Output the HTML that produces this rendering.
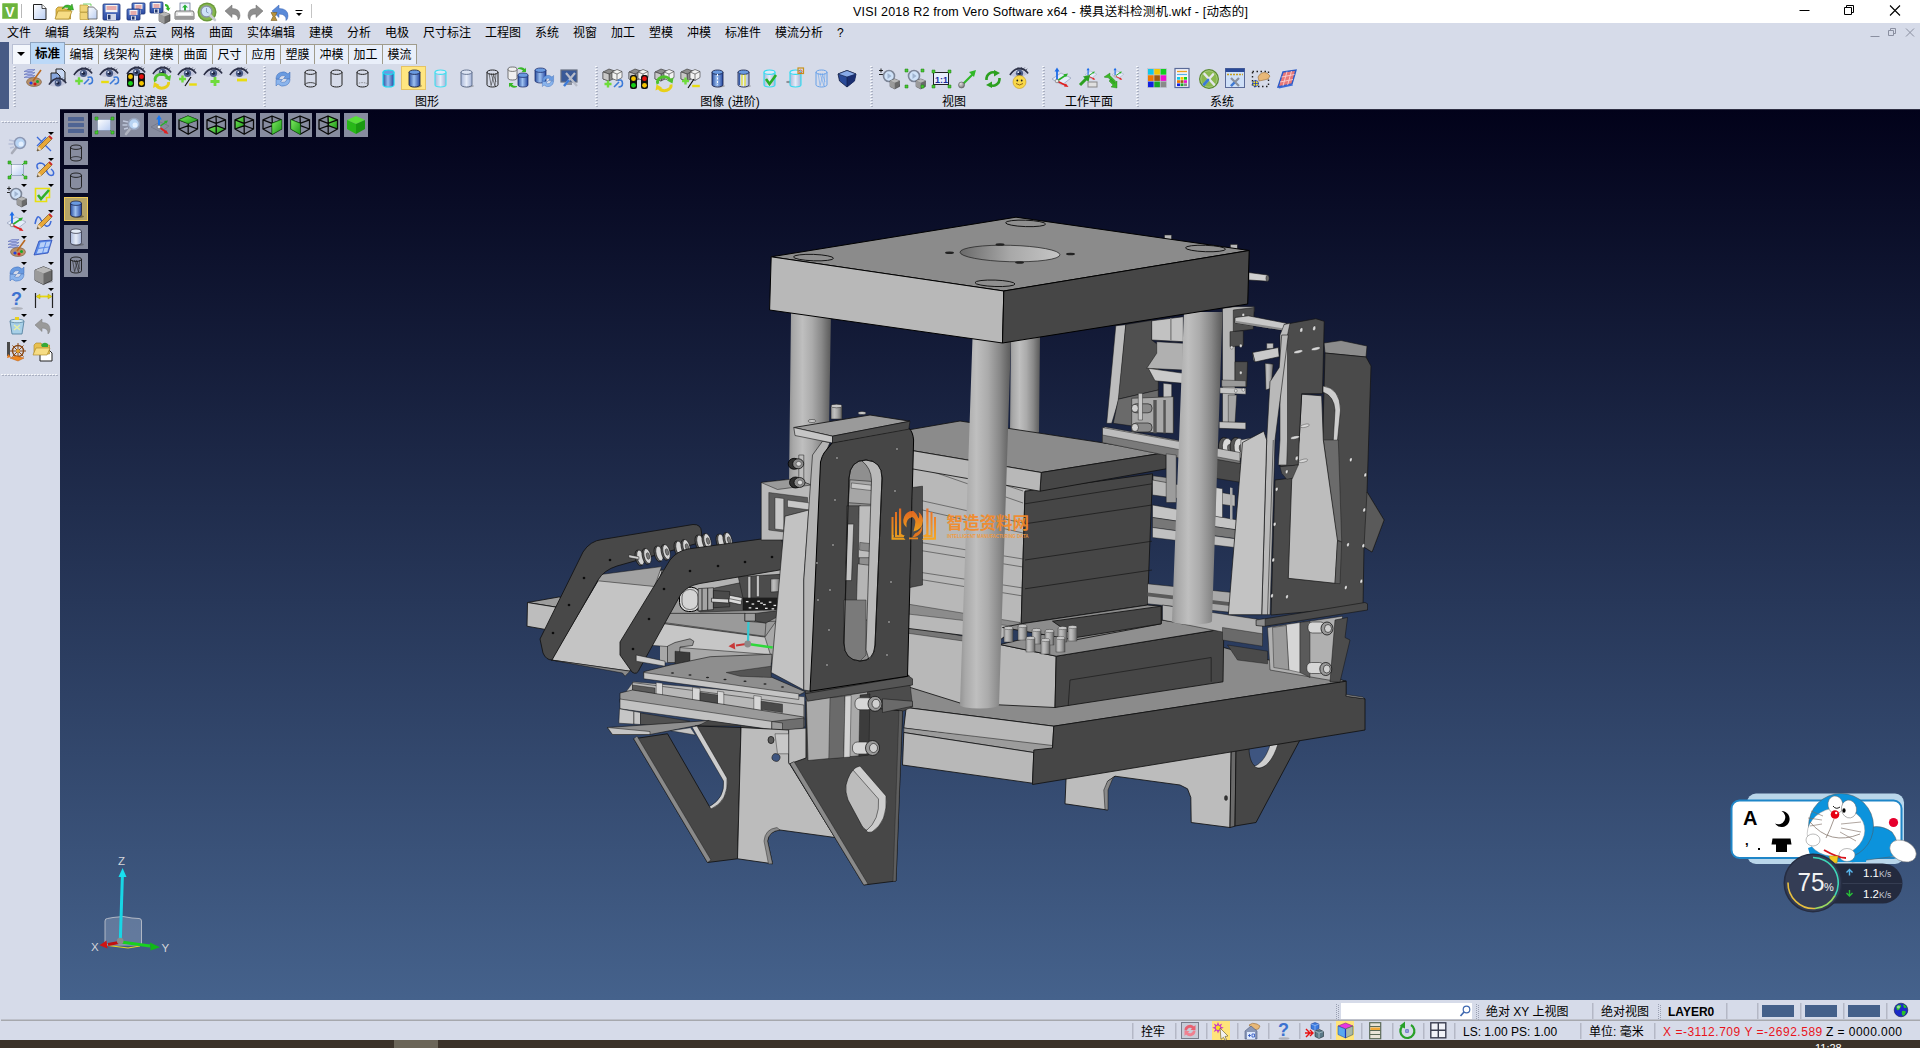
<!DOCTYPE html>
<html lang="zh"><head><meta charset="utf-8"><title>VISI 2018 R2 from Vero Software x64</title>
<style>
html,body{margin:0;padding:0;background:#d6dbe9;overflow:hidden}
#app{position:relative;width:1920px;height:1048px;overflow:hidden;background:#d6dbe9;font-family:"Liberation Sans","Noto Sans CJK SC",sans-serif}
.t{position:absolute;white-space:nowrap;line-height:1;font-size:12px;color:#000}
svg text{font-family:"Liberation Sans","Noto Sans CJK SC",sans-serif}
</style>

</head><body>
<div id="app">
<svg id="vp" width="1860" height="891" viewBox="60 109 1860 891" style="position:absolute;left:60px;top:109px">
<defs>
<linearGradient id="bg" x1="0" y1="0" x2="0" y2="1"><stop offset="0" stop-color="#02021a"/><stop offset="1" stop-color="#45628c"/></linearGradient>
<linearGradient id="cyl" x1="0" y1="0" x2="1" y2="0"><stop offset="0" stop-color="#959595"/><stop offset="0.1" stop-color="#a8a8a8"/><stop offset="0.32" stop-color="#bfbfbf"/><stop offset="0.55" stop-color="#ababab"/><stop offset="0.78" stop-color="#888888"/><stop offset="0.93" stop-color="#686868"/><stop offset="1" stop-color="#5a5a5a"/></linearGradient>
<linearGradient id="hole" x1="0" y1="0" x2="1" y2="0"><stop offset="0" stop-color="#6a6a6a"/><stop offset="0.5" stop-color="#a8a8a8"/><stop offset="1" stop-color="#c6c6c6"/></linearGradient>
</defs>
<rect x="60" y="109" width="1860" height="891" fill="url(#bg)"/>
<rect x="60" y="108" width="1860" height="1.2" fill="#e8ebf3"/>
<path d="M791,312 L789,486 A19.5,3.51 0 0 0 828,486 L831,312 Z" fill="url(#cyl)"/>
<path d="M1011,336 L1010,432 A14.5,2.61 0 0 0 1039,432 L1040,336 Z" fill="url(#cyl)"/>
<polygon points="1066.2,775.0 1065.0,803.8 1107.5,810.0 1105.0,790.0 1108.0,781.2 1115.0,776.2 1180.0,785.0 1187.5,788.8 1190.8,797.5 1191.2,822.5 1230.0,827.5 1231.2,750.0" fill="#bcbcbc" stroke="#121212" stroke-width="0.85" stroke-linejoin="round" />
<polygon points="1230.0,827.5 1235.0,826.2 1236.2,750.0 1231.2,750.0" fill="#6a6a6a" stroke="#121212" stroke-width="0.85" stroke-linejoin="round" />
<polygon points="1103.8,790.0 1107.5,781.2 1115.0,776.2 1112.5,779.0 1108.0,790.0 1108.0,810.0 1105.0,809.5" fill="#8a8a8a" stroke="#121212" stroke-width="0.5" stroke-linejoin="round" />
<path d="M1236,748 L1301,738 L1256,822.5 L1235,826 Z" fill="#464646" stroke="#121212" stroke-width="0.85" stroke-linejoin="round" />
<path d="M1249,748 L1277,744 C1272,760 1266,768 1258,768 C1252,766 1249,758 1249,748 Z" fill="#3e5580" stroke="#121212" stroke-width="0.6" stroke-linejoin="round" />
<path d="M1270,745 L1278,744 C1273,760 1266,768 1258,768 C1256,767.6 1255,767 1254.5,766.3 C1262,763 1267,755 1270,745Z" fill="#cfcfcf" stroke="#121212" stroke-width="0.5" stroke-linejoin="round" />
<ellipse cx="1226" cy="798" rx="1.6" ry="2.6" fill="#333" stroke="#1c1c1c" stroke-width="0.4" />
<polygon points="895.0,677.5 895.0,706.2 906.2,707.5 1053.8,726.2 1346.2,681.2 1200,641" fill="#8b8b8b" stroke="#121212" stroke-width="0.85" stroke-linejoin="round" />
<polygon points="906.2,707.5 1053.8,726.2 1052.5,748.0 903.8,728.0" fill="#b8b8b8" stroke="#121212" stroke-width="0.85" stroke-linejoin="round" />
<polygon points="903.8,728.0 1052.5,745.5 1052.5,748.8 1033.8,752.5 903.8,732.5" fill="#9c9c9c" stroke="#121212" stroke-width="0.5" stroke-linejoin="round" />
<polygon points="903.8,732.5 1033.8,752.5 1032.5,783.2 902.5,765.0" fill="#b8b8b8" stroke="#121212" stroke-width="0.85" stroke-linejoin="round" />
<polygon points="1053.8,726.2 1346.2,681.2 1346.2,696.2 1365.0,698.8 1365.0,730.0 1032.5,784.5 1033.8,750.0 1052.5,748.0" fill="#464646" stroke="#121212" stroke-width="0.85" stroke-linejoin="round" />
<polygon points="1346.2,696.2 1365.0,698.8 1362.5,697.0 1346.2,694.5" fill="#8a8a8a" stroke="#121212" stroke-width="0.5" stroke-linejoin="round" />
<polygon points="1000.0,644.5 1056.2,656.2 1055.0,707.5 960.0,703.0 906.2,686.2 906.2,626.2" fill="#b8b8b8" stroke="#121212" stroke-width="0.85" stroke-linejoin="round" />
<polygon points="906.2,625.5 1000.0,643.0 1000.0,646.2 906.2,633.0" fill="#777" stroke="#121212" stroke-width="0.4" stroke-linejoin="round" />
<polygon points="1056.2,656.2 1223.8,628.8 1223.0,681.8 1055.0,707.5" fill="#464646" stroke="#121212" stroke-width="0.85" stroke-linejoin="round" />
<polyline points="1070.0,680.0 1211.2,657.5 1211.2,681.8" fill="none" stroke="#1a1a1a" stroke-width="0.7"/>
<polyline points="1070.0,680.0 1068.2,705.8" fill="none" stroke="#1a1a1a" stroke-width="0.7"/>
<polygon points="1000.0,644.5 1056.2,656.2 1223.8,628.8 1161.2,620.0 1161.2,606.2" fill="#8f8f8f" stroke="#121212" stroke-width="0.85" stroke-linejoin="round" />
<polygon points="905,437 1041.2,472.5 1040.0,491.2 1025.0,491.2 1021.2,623.8 1000,640 905,628" fill="#b8b8b8" stroke="#121212" stroke-width="0.85" stroke-linejoin="round" />
<polygon points="906.2,603.8 1020.0,622.5 1020.0,627.0 906.2,613.8" fill="#8c8c8c" stroke="#121212" stroke-width="0.4" stroke-linejoin="round" />
<polyline points="905,452 1023,491" fill="none" stroke="#3a3a3a" stroke-width="0.6"/>
<polyline points="905,462 1023,503" fill="none" stroke="#3a3a3a" stroke-width="0.6"/>
<polyline points="905,497 1023,523" fill="none" stroke="#3a3a3a" stroke-width="0.6"/>
<polyline points="905,506 1023,533" fill="none" stroke="#3a3a3a" stroke-width="0.6"/>
<polyline points="905,540 1023,559" fill="none" stroke="#3a3a3a" stroke-width="0.6"/>
<polyline points="905,548 1023,567" fill="none" stroke="#3a3a3a" stroke-width="0.6"/>
<polyline points="905,570 1023,588" fill="none" stroke="#3a3a3a" stroke-width="0.6"/>
<polyline points="905,577 1023,596" fill="none" stroke="#3a3a3a" stroke-width="0.6"/>
<polygon points="1025.0,491.2 1152.5,473.8 1147.5,605.0 1021.2,623.8" fill="#464646" stroke="#121212" stroke-width="0.85" stroke-linejoin="round" />
<polyline points="1025.0,503.8 1152.0,483.8" fill="none" stroke="#161616" stroke-width="0.7"/>
<polyline points="1025.0,523.8 1152.0,505.0" fill="none" stroke="#161616" stroke-width="0.7"/>
<polyline points="1025.0,560.0 1152.0,541.2" fill="none" stroke="#161616" stroke-width="0.7"/>
<polyline points="1025.0,588.8 1152.0,570.0" fill="none" stroke="#161616" stroke-width="0.7"/>
<polygon points="1021.2,623.8 1147.5,605.0 1161.2,606.2 1161.2,623.8 1075.0,640.0 1002.5,627.5" fill="#8c8c8c" stroke="#121212" stroke-width="0.85" stroke-linejoin="round" />
<polygon points="1052.5,621.2 1161.2,606.2 1161.2,623.8 1076.2,637.5" fill="#464646" stroke="#121212" stroke-width="0.85" stroke-linejoin="round" />
<polygon points="850,440 960,421 1166.2,452.5 1041.2,472.5" fill="#8b8b8b" stroke="#121212" stroke-width="0.85" stroke-linejoin="round" />
<polygon points="1041.2,472.5 1166.2,452.5 1166.2,468.8 1040.0,491.2" fill="#464646" stroke="#121212" stroke-width="0.85" stroke-linejoin="round" />
<polygon points="850,440 1041.2,472.5 1040.0,491.2 850,458" fill="#b8b8b8" stroke="#121212" stroke-width="0.85" stroke-linejoin="round" />
<rect x="1004" y="628" width="9" height="14" fill="url(#cyl)" stroke="#333" stroke-width="0.4"/>
<ellipse cx="1008.5" cy="628" rx="4.5" ry="1.6" fill="#c8c8c8" stroke="#333" stroke-width="0.4" />
<rect x="1018" y="626" width="9" height="14" fill="url(#cyl)" stroke="#333" stroke-width="0.4"/>
<ellipse cx="1022.5" cy="626" rx="4.5" ry="1.6" fill="#c8c8c8" stroke="#333" stroke-width="0.4" />
<rect x="1032" y="630" width="9" height="14" fill="url(#cyl)" stroke="#333" stroke-width="0.4"/>
<ellipse cx="1036.5" cy="630" rx="4.5" ry="1.6" fill="#c8c8c8" stroke="#333" stroke-width="0.4" />
<rect x="1045" y="631" width="9" height="14" fill="url(#cyl)" stroke="#333" stroke-width="0.4"/>
<ellipse cx="1049.5" cy="631" rx="4.5" ry="1.6" fill="#c8c8c8" stroke="#333" stroke-width="0.4" />
<rect x="1058" y="628" width="9" height="14" fill="url(#cyl)" stroke="#333" stroke-width="0.4"/>
<ellipse cx="1062.5" cy="628" rx="4.5" ry="1.6" fill="#c8c8c8" stroke="#333" stroke-width="0.4" />
<rect x="1068" y="627" width="9" height="14" fill="url(#cyl)" stroke="#333" stroke-width="0.4"/>
<ellipse cx="1072.5" cy="627" rx="4.5" ry="1.6" fill="#c8c8c8" stroke="#333" stroke-width="0.4" />
<rect x="1026" y="638" width="9" height="14" fill="url(#cyl)" stroke="#333" stroke-width="0.4"/>
<ellipse cx="1030.5" cy="638" rx="4.5" ry="1.6" fill="#c8c8c8" stroke="#333" stroke-width="0.4" />
<rect x="1041" y="640" width="9" height="14" fill="url(#cyl)" stroke="#333" stroke-width="0.4"/>
<ellipse cx="1045.5" cy="640" rx="4.5" ry="1.6" fill="#c8c8c8" stroke="#333" stroke-width="0.4" />
<rect x="1056" y="638" width="9" height="14" fill="url(#cyl)" stroke="#333" stroke-width="0.4"/>
<ellipse cx="1060.5" cy="638" rx="4.5" ry="1.6" fill="#c8c8c8" stroke="#333" stroke-width="0.4" />
<polygon points="1115.8,325.8 1125.8,324.7 1119.2,398.3 1111.7,423.3 1106.7,423.3" fill="#bdbdbd" stroke="#121212" stroke-width="0.5" stroke-linejoin="round" />
<polygon points="1125.8,324.5 1151.7,320.3 1151.7,340.0 1158.3,345.0 1158.3,390.0 1118.3,399.2" fill="#505050" stroke="#121212" stroke-width="0.5" stroke-linejoin="round" />
<polygon points="1118.3,399.2 1158.3,390.0 1158.3,396.7 1173.3,396.7 1173.3,431.7 1113.3,423.3" fill="#6a6a6a" stroke="#121212" stroke-width="0.5" stroke-linejoin="round" />
<polygon points="1151.7,320.8 1183.3,316.7 1183.3,341.7 1151.7,340.0" fill="#c2c2c2" stroke="#121212" stroke-width="0.6" stroke-linejoin="round" />
<polygon points="1170.0,318.3 1171.7,318.2 1171.7,341.0 1170.0,340.8" fill="#8a8a8a" />
<polygon points="1156.7,341.7 1183.3,343.3 1183.3,370.0 1146.7,368.3 1156.7,353.3" fill="#b0b0b0" stroke="#121212" stroke-width="0.5" stroke-linejoin="round" />
<polygon points="1148.3,368.3 1183.3,373.3 1183.3,383.3 1155.0,380.8" fill="#cacaca" stroke="#121212" stroke-width="0.5" stroke-linejoin="round" />
<polygon points="1163.3,383.3 1171.7,384.2 1171.7,398.3 1163.3,398.3" fill="#c2c2c2" stroke="#121212" stroke-width="0.4" stroke-linejoin="round" />
<polygon points="1131.7,398.3 1173.3,396.7 1173.3,433.3 1131.7,431.7" fill="#a8a8a8" stroke="#121212" stroke-width="0.5" stroke-linejoin="round" />
<polygon points="1153.3,400.0 1156.7,400.0 1156.7,433.3 1153.3,433.3" fill="#555" />
<polygon points="1163.3,400.0 1165.8,400.0 1165.8,433.3 1163.3,433.3" fill="#555" />
<rect x="1132.0" y="403.8" width="20" height="9" rx="4" fill="#8a8a8a" stroke="#111" stroke-width="0.6"/>
<ellipse cx="1135.0" cy="408.3" rx="3.5" ry="4" fill="#d0d0d0" stroke="#111" stroke-width="0.6" />
<rect x="1132.0" y="423.0" width="20" height="9" rx="4" fill="#8a8a8a" stroke="#111" stroke-width="0.6"/>
<ellipse cx="1135.0" cy="427.5" rx="3.5" ry="4" fill="#d0d0d0" stroke="#111" stroke-width="0.6" />
<polygon points="1138.3,393.3 1142.5,393.3 1142.5,420.0 1138.3,420.0" fill="#c8c8c8" stroke="#121212" stroke-width="0.4" stroke-linejoin="round" />
<polygon points="1104.2,426.7 1180.0,440.8 1180.0,450.0 1104.2,435.0" fill="#c6c6c6" stroke="#121212" stroke-width="0.5" stroke-linejoin="round" />
<polygon points="1104.2,435.0 1180.0,450.0 1180.0,456.7 1110.0,441.7" fill="#8a8a8a" stroke="#121212" stroke-width="0.4" stroke-linejoin="round" />
<polygon points="1222.5,308.3 1235.0,306.7 1254.2,306.7 1254.2,311.7 1235.0,315.0 1235.0,423.3 1222.5,423.3" fill="#b5b5b5" stroke="#121212" stroke-width="0.5" stroke-linejoin="round" />
<polygon points="1233.3,310.0 1254.2,307.5 1253.3,329.2 1233.3,331.7" fill="#4e4e4e" stroke="#121212" stroke-width="0.5" stroke-linejoin="round" />
<polygon points="1230.0,331.7 1243.3,330.8 1243.3,345.8 1230.0,346.7" fill="#4e4e4e" stroke="#121212" stroke-width="0.5" stroke-linejoin="round" />
<polygon points="1235.0,361.7 1247.5,361.7 1246.7,386.7 1235.0,386.7" fill="#4e4e4e" stroke="#121212" stroke-width="0.5" stroke-linejoin="round" />
<polygon points="1221.7,380.0 1245.8,380.8 1245.8,386.7 1221.7,386.7" fill="#9a9a9a" stroke="#121212" stroke-width="0.4" stroke-linejoin="round" />
<polygon points="1220.0,387.5 1245.8,388.3 1245.8,394.2 1220.0,393.3" fill="#c6c6c6" stroke="#121212" stroke-width="0.4" stroke-linejoin="round" />
<polygon points="1228.3,395.0 1236.7,395.0 1235.0,423.3 1228.3,423.3" fill="#a4a4a4" stroke="#121212" stroke-width="0.4" stroke-linejoin="round" />
<polygon points="1219.2,421.7 1245.8,422.5 1245.8,429.2 1219.2,428.3" fill="#c2c2c2" stroke="#121212" stroke-width="0.5" stroke-linejoin="round" />
<ellipse cx="1231.7" cy="347.5" rx="1.4" ry="1.7" fill="#d8d8d8" stroke="#111" stroke-width="0.3" />
<ellipse cx="1240.8" cy="345.8" rx="1.4" ry="1.7" fill="#d8d8d8" stroke="#111" stroke-width="0.3" />
<ellipse cx="1240.8" cy="372.8" rx="1.4" ry="1.7" fill="#d8d8d8" stroke="#111" stroke-width="0.3" />
<ellipse cx="1235.8" cy="390.8" rx="1.4" ry="1.7" fill="#d8d8d8" stroke="#111" stroke-width="0.3" />
<ellipse cx="1243.3" cy="389.7" rx="1.4" ry="1.7" fill="#d8d8d8" stroke="#111" stroke-width="0.3" />
<ellipse cx="1243.3" cy="315.0" rx="1.4" ry="1.7" fill="#d8d8d8" stroke="#111" stroke-width="0.3" />
<ellipse cx="1225.0" cy="448.3" rx="6.5" ry="11" fill="#555" stroke="#111" stroke-width="0.7" transform="rotate(-8 1225.0 448.3)" />
<ellipse cx="1228.0" cy="448.3" rx="5.5" ry="10" fill="#d8d8d8" stroke="#111" stroke-width="0.5" transform="rotate(-8 1228.0 448.3)" />
<ellipse cx="1230.0" cy="448.3" rx="2.5" ry="4" fill="#666" stroke="#111" stroke-width="0.4" transform="rotate(-8 1230.0 448.3)" />
<ellipse cx="1236.7" cy="448.3" rx="6.5" ry="11" fill="#555" stroke="#111" stroke-width="0.7" transform="rotate(-8 1236.7 448.3)" />
<ellipse cx="1239.7" cy="448.3" rx="5.5" ry="10" fill="#d8d8d8" stroke="#111" stroke-width="0.5" transform="rotate(-8 1239.7 448.3)" />
<ellipse cx="1241.7" cy="448.3" rx="2.5" ry="4" fill="#666" stroke="#111" stroke-width="0.4" transform="rotate(-8 1241.7 448.3)" />
<polygon points="1240.8,440.0 1256.7,436.7 1256.7,464.7 1240.8,464.7" fill="#c9c9c9" stroke="#121212" stroke-width="0.4" stroke-linejoin="round" />
<polygon points="1235.0,317.5 1248.3,315.8 1286.7,323.3 1285.3,330.8 1235.0,322.8" fill="#c8c8c8" stroke="#121212" stroke-width="0.6" stroke-linejoin="round" />
<polygon points="1235.0,320.8 1285.3,328.7 1285.3,330.8 1235.0,322.8" fill="#8e8e8e" />
<polygon points="1248.8,272.5 1267.5,275.0 1267.5,281.2 1248.8,280.0" fill="#cfcfcf" stroke="#121212" stroke-width="0.6" stroke-linejoin="round" />
<ellipse cx="1267.5" cy="278.2" rx="1.6" ry="3" fill="#666" stroke="#1c1c1c" stroke-width="0.4" />
<rect x="1164.5" y="235.0" width="7" height="6" fill="#b8b8b8" stroke="#222" stroke-width="0.5"/>
<rect x="1230.3" y="244.5" width="7" height="6" fill="#b8b8b8" stroke="#222" stroke-width="0.5"/>
<polygon points="1102.5,427.5 1240.0,452.5 1240.0,470.0 1102.5,442.5" fill="#bdbdbd" stroke="#121212" stroke-width="0.5" stroke-linejoin="round" />
<polygon points="1102.5,435.0 1240.0,461.2 1240.0,470.0 1102.5,442.5" fill="#7a7a7a" stroke="#121212" stroke-width="0.4" stroke-linejoin="round" />
<polygon points="1212.1,458.6 1242.7,464.0 1241.7,482.5 1212.1,477.7" fill="#4a4a4a" stroke="#121212" stroke-width="0.5" stroke-linejoin="round" />
<polygon points="1153.0,475.8 1175.9,478.7 1175.9,495.8 1153.0,493.0" fill="#9a9a9a" stroke="#121212" stroke-width="0.5" stroke-linejoin="round" />
<polygon points="1153.9,481.5 1159.7,481.9 1159.7,491.1 1153.9,490.7" fill="#d0d0d0" stroke="#121212" stroke-width="0.4" stroke-linejoin="round" />
<polygon points="1165.4,483.4 1172.1,484.0 1172.1,493.9 1165.4,493.0" fill="#d0d0d0" stroke="#121212" stroke-width="0.4" stroke-linejoin="round" />
<polygon points="1152.5,480.0 1235.0,495.0 1235.0,506.2 1152.5,495.0" fill="#b8b8b8" stroke="#121212" stroke-width="0.5" stroke-linejoin="round" />
<polygon points="1152.5,505.0 1237.5,520.0 1237.5,530.0 1152.5,517.5" fill="#c4c4c4" stroke="#121212" stroke-width="0.5" stroke-linejoin="round" />
<polygon points="1152.5,517.5 1237.5,530.0 1237.5,538.8 1152.5,527.5" fill="#777" stroke="#121212" stroke-width="0.4" stroke-linejoin="round" />
<polygon points="1152.5,527.5 1235.0,538.8 1235.0,547.5 1152.5,537.5" fill="#c0c0c0" stroke="#121212" stroke-width="0.4" stroke-linejoin="round" />
<polygon points="1166.2,453.8 1176.2,455.0 1176.2,502.5 1166.2,502.5" fill="#9c9c9c" stroke="#121212" stroke-width="0.4" stroke-linejoin="round" />
<polygon points="1215.0,487.5 1222.5,488.8 1222.5,517.5 1215.0,516.2" fill="#cfcfcf" stroke="#121212" stroke-width="0.4" stroke-linejoin="round" />
<polygon points="1230.0,487.5 1232.5,488.0 1232.5,520.0 1230.0,520.0" fill="#a8a8a8" />
<polygon points="1147.5,583.8 1232.5,592.5 1232.5,612.5 1147.5,603.8" fill="#a9a9a9" stroke="#121212" stroke-width="0.5" stroke-linejoin="round" />
<polygon points="1147.5,592.5 1232.5,602.5 1232.5,606.2 1147.5,596.2" fill="#5a5a5a" />
<polygon points="1162.5,605.0 1262.5,620.0 1262.5,640.0 1162.5,620.0" fill="#b2b2b2" stroke="#121212" stroke-width="0.5" stroke-linejoin="round" />
<polygon points="1222.5,627.5 1262.5,633.8 1262.5,646.2 1222.5,640.0" fill="#6a6a6a" stroke="#121212" stroke-width="0.4" stroke-linejoin="round" />
<polygon points="1227.5,645.0 1267.5,651.2 1267.5,663.8 1237.5,660.0" fill="#4a4a4a" stroke="#121212" stroke-width="0.4" stroke-linejoin="round" />
<polygon points="1324,343 1341,340.5 1367,346 1366,357 1325,353" fill="#8c8c8c" stroke="#121212" stroke-width="0.6" stroke-linejoin="round" />
<polygon points="1325,353 1366,357 1371,366 1367,492 1384,520 1372,552 1364,547 1363,607 1271,615 1275,480 1292,478 1294,465 1322,465" fill="#4a4a4a" stroke="#121212" stroke-width="0.7" stroke-linejoin="round" />
<polygon points="1367,492 1384,520 1372,552 1364,547" fill="#5a5a5a" stroke="#121212" stroke-width="0.5" stroke-linejoin="round" />
<path d="M1323,386 Q1340,388 1340.5,410 L1337,445 L1333,445 L1335,410 Q1334,396 1323,392 Z" fill="#cdcdcd" stroke="#121212" stroke-width="0.5" stroke-linejoin="round" />
<polygon points="1323.3,440.0 1338.3,440.0 1341.7,541.7 1336.7,540.0" fill="#6b6b6b" stroke="#121212" stroke-width="0.4" stroke-linejoin="round" />
<polygon points="1301.7,394.2 1321.7,395.8 1323.3,440.0 1337.5,540.8 1335.0,583.3 1288.3,578.3 1291.7,480.0 1299.2,440.0" fill="#bdbdbd" stroke="#121212" stroke-width="0.7" stroke-linejoin="round" />
<polygon points="1337.5,540.8 1341.7,542.0 1340.0,583.7 1335.0,583.3" fill="#5c5c5c" stroke="#121212" stroke-width="0.4" stroke-linejoin="round" />
<polygon points="1284.2,324.5 1315.8,318.7 1324.2,321.3 1322.5,393.7 1301.7,393.7 1299.2,440.0 1298.3,465.0 1280.0,466.7 1281.7,440.0" fill="#4c4c4c" stroke="#121212" stroke-width="0.7" stroke-linejoin="round" />
<polygon points="1280.0,335.0 1284.2,324.5 1290.0,323.3 1287.5,335.0 1287.5,440.0 1286.7,465.0 1278.3,465.0 1280.0,440.0" fill="#bcbcbc" stroke="#121212" stroke-width="0.5" stroke-linejoin="round" />
<ellipse cx="1301.3" cy="330.0" rx="1.5" ry="2.4" fill="#d8d8d8" stroke="#111" stroke-width="0.3" transform="rotate(15 1301.3 330.0)" />
<ellipse cx="1314.2" cy="328.3" rx="1.5" ry="2.4" fill="#d8d8d8" stroke="#111" stroke-width="0.3" transform="rotate(15 1314.2 328.3)" />
<ellipse cx="1296.7" cy="458.3" rx="1.5" ry="2.4" fill="#d8d8d8" stroke="#111" stroke-width="0.3" transform="rotate(15 1296.7 458.3)" />
<ellipse cx="1298.3" cy="351.7" rx="4.5" ry="1.5" fill="#d8d8d8" stroke="#111" stroke-width="0.3" transform="rotate(-12 1298.3 351.7)" />
<ellipse cx="1315.8" cy="348.7" rx="4.5" ry="1.5" fill="#d8d8d8" stroke="#111" stroke-width="0.3" transform="rotate(-12 1315.8 348.7)" />
<ellipse cx="1295.0" cy="437.5" rx="4.5" ry="1.5" fill="#d8d8d8" stroke="#111" stroke-width="0.3" transform="rotate(-12 1295.0 437.5)" />
<ellipse cx="1303.3" cy="460.8" rx="4.5" ry="1.5" fill="#d8d8d8" stroke="#111" stroke-width="0.3" transform="rotate(-12 1303.3 460.8)" />
<ellipse cx="1305.0" cy="425.8" rx="4.5" ry="1.5" fill="#d8d8d8" stroke="#111" stroke-width="0.3" transform="rotate(-12 1305.0 425.8)" />
<polygon points="1280.0,466.7 1298.3,465.0 1292.5,478.3 1286.7,479.2 1281.7,473.3" fill="#555" stroke="#121212" stroke-width="0.4" stroke-linejoin="round" />
<polygon points="1252.5,352.5 1278.3,347.5 1279.2,356.7 1255.0,362.0" fill="#c9c9c9" stroke="#121212" stroke-width="0.6" stroke-linejoin="round" />
<polygon points="1252.5,352.5 1255.0,362.0 1253.3,360.0" fill="#8a8a8a" stroke="#121212" stroke-width="0.3" stroke-linejoin="round" />
<polygon points="1265.0,363.3 1273.3,364.2 1270.8,388.3 1265.8,390.0" fill="url(#cyl)" stroke="#121212" stroke-width="0.5" stroke-linejoin="round" />
<polygon points="1266.7,343.3 1273.3,343.3 1273.3,348.3 1266.7,348.7" fill="#c0c0c0" stroke="#121212" stroke-width="0.4" stroke-linejoin="round" />
<polygon points="1270.0,381.7 1279.2,367.5 1281.7,335.0 1288.3,335.0 1275.0,440.0 1270.0,614.7 1261.7,614.7 1266.7,440.0" fill="#b9b9b9" stroke="#121212" stroke-width="0.6" stroke-linejoin="round" />
<polygon points="1242.5,442.5 1263.8,431.2 1266.7,440.0 1261.7,614.7 1228.3,614.7" fill="#c3c3c3" stroke="#121212" stroke-width="0.7" stroke-linejoin="round" />
<polyline points="1273.3,440.0 1267.5,614.7" fill="none" stroke="#222" stroke-width="0.6"/>
<ellipse cx="1276.7" cy="489.2" rx="1.3" ry="2.0" fill="#e0e0e0" stroke="#111" stroke-width="0.3" transform="rotate(15 1276.7 489.2)" />
<ellipse cx="1274.7" cy="524.2" rx="1.3" ry="2.0" fill="#e0e0e0" stroke="#111" stroke-width="0.3" transform="rotate(15 1274.7 524.2)" />
<ellipse cx="1273.3" cy="560.0" rx="1.3" ry="2.0" fill="#e0e0e0" stroke="#111" stroke-width="0.3" transform="rotate(15 1273.3 560.0)" />
<ellipse cx="1272.0" cy="595.8" rx="1.3" ry="2.0" fill="#e0e0e0" stroke="#111" stroke-width="0.3" transform="rotate(15 1272.0 595.8)" />
<ellipse cx="1287.0" cy="596.7" rx="1.3" ry="2.0" fill="#e0e0e0" stroke="#111" stroke-width="0.3" transform="rotate(15 1287.0 596.7)" />
<ellipse cx="1345.8" cy="587.5" rx="1.3" ry="2.0" fill="#e0e0e0" stroke="#111" stroke-width="0.3" transform="rotate(15 1345.8 587.5)" />
<ellipse cx="1348.0" cy="544.7" rx="1.3" ry="2.0" fill="#e0e0e0" stroke="#111" stroke-width="0.3" transform="rotate(15 1348.0 544.7)" />
<ellipse cx="1350.8" cy="459.7" rx="1.3" ry="2.0" fill="#e0e0e0" stroke="#111" stroke-width="0.3" transform="rotate(15 1350.8 459.7)" />
<ellipse cx="1365.3" cy="475.0" rx="1.3" ry="2.0" fill="#e0e0e0" stroke="#111" stroke-width="0.3" transform="rotate(15 1365.3 475.0)" />
<ellipse cx="1364.2" cy="510.0" rx="1.3" ry="2.0" fill="#e0e0e0" stroke="#111" stroke-width="0.3" transform="rotate(15 1364.2 510.0)" />
<ellipse cx="1363.3" cy="545.8" rx="1.3" ry="2.0" fill="#e0e0e0" stroke="#111" stroke-width="0.3" transform="rotate(15 1363.3 545.8)" />
<ellipse cx="1361.3" cy="581.3" rx="1.3" ry="2.0" fill="#e0e0e0" stroke="#111" stroke-width="0.3" transform="rotate(15 1361.3 581.3)" />
<ellipse cx="1286.7" cy="471.7" rx="1.3" ry="2.0" fill="#e0e0e0" stroke="#111" stroke-width="0.3" transform="rotate(15 1286.7 471.7)" />
<ellipse cx="1296.7" cy="458.3" rx="1.3" ry="2.0" fill="#e0e0e0" stroke="#111" stroke-width="0.3" transform="rotate(15 1296.7 458.3)" />
<polygon points="1256.2,620.0 1265.0,618.8 1365.0,602.5 1367.5,603.8 1367.5,610.0 1265.0,626.2 1256.2,625.5" fill="#4a4a4a" stroke="#121212" stroke-width="0.6" stroke-linejoin="round" />
<polygon points="1256.2,620.0 1265.0,618.8 1265.0,626.2 1256.2,625.5" fill="#8d8d8d" stroke="#121212" stroke-width="0.4" stroke-linejoin="round" />
<polygon points="1267.5,627.5 1342.5,616.2 1340.0,682.0 1270.0,670.0" fill="#b0b0b0" stroke="#121212" stroke-width="0.5" stroke-linejoin="round" />
<polygon points="1286.2,624.5 1300.0,622.5 1300.0,672.5 1288.8,670.0" fill="#d6d6d6" stroke="#121212" stroke-width="0.4" stroke-linejoin="round" />
<polygon points="1272.5,627.5 1286.2,625.5 1288.8,670.0 1273.8,667.5" fill="#9a9a9a" stroke="#121212" stroke-width="0.4" stroke-linejoin="round" />
<polygon points="1300.0,622.5 1310.0,621.2 1310.0,677.5 1300.0,672.5" fill="#5a5a5a" stroke="#121212" stroke-width="0.4" stroke-linejoin="round" />
<polygon points="1335.0,620.0 1347.5,617.5 1345.0,637.5 1350.0,640.0 1340.0,682.0 1330.0,682.0" fill="#4c4c4c" stroke="#121212" stroke-width="0.5" stroke-linejoin="round" />
<rect x="1308.0" y="622.0" width="17" height="11" rx="4.5" fill="#d6d6d6" stroke="#222" stroke-width="0.6"/>
<ellipse cx="1327.0" cy="628.5" rx="6" ry="6.5" fill="#9a9a9a" stroke="#111" stroke-width="0.8" />
<ellipse cx="1328.0" cy="628.5" rx="3.5" ry="4" fill="#d0d0d0" stroke="#111" stroke-width="0.6" />
<rect x="1306.8" y="662.5" width="17" height="11" rx="4.5" fill="#d6d6d6" stroke="#222" stroke-width="0.6"/>
<ellipse cx="1325.8" cy="669.0" rx="6" ry="6.5" fill="#9a9a9a" stroke="#111" stroke-width="0.8" />
<ellipse cx="1326.8" cy="669.0" rx="3.5" ry="4" fill="#d0d0d0" stroke="#111" stroke-width="0.6" />
<polygon points="527.5,602.5 558.8,597.0 640.0,607.5 605.0,615.0" fill="#9d9d9d" stroke="#121212" stroke-width="0.85" stroke-linejoin="round" />
<polygon points="527.5,602.5 605.0,615.0 605.0,640.0 527.0,626.2" fill="#bdbdbd" stroke="#121212" stroke-width="0.85" stroke-linejoin="round" />
<polygon points="600.0,577.5 662.5,570.0 630.0,671.2 551.2,660.0" fill="#c4c4c4" stroke="#121212" stroke-width="0.85" stroke-linejoin="round" />
<polygon points="551.2,660.0 630.0,671.2 625.0,676.2 622.5,673.0" fill="#8a8a8a" stroke="#121212" stroke-width="0.5" stroke-linejoin="round" />
<polygon points="600.6,574.5 661.6,566.6 654.6,586.5 596.7,580.7" fill="#a2a2a2" stroke="#121212" stroke-width="0.5" stroke-linejoin="round" />
<polygon points="662.5,570.0 782.5,552.5 782.5,630.0 650.0,617.5" fill="#b4b4b4" stroke="#121212" stroke-width="0.5" stroke-linejoin="round" />
<polygon points="660.0,615.0 780.0,620.0 780.0,662.5 660.0,662.5" fill="#a8a8a8" />
<polygon points="665.5,611.5 777.4,619.4 764.9,637.1 650.7,622.0" fill="#9a9a9a" stroke="#121212" stroke-width="0.5" stroke-linejoin="round" />
<polygon points="650.7,622.0 764.9,637.1 770.4,654.6 649.9,645.2" fill="#c6c6c6" stroke="#121212" stroke-width="0.5" stroke-linejoin="round" />
<polygon points="674.3,596.3 781.2,574.3 781.2,609.6 698.2,613.4" fill="#555555" stroke="#121212" stroke-width="0.5" stroke-linejoin="round" />
<polygon points="665.7,613.4 677.2,596.3 700.1,612.0 781.2,609.6 779.3,621.1 755.4,622.0 744.9,613.4" fill="#9c9c9c" stroke="#121212" stroke-width="0.5" stroke-linejoin="round" />
<polygon points="660.0,617.3 665.7,613.4 744.9,613.4 744.9,621.1 765.9,623.0 765.0,636.3 660.0,622.0" fill="#9a9a9a" stroke="#121212" stroke-width="0.5" stroke-linejoin="round" />
<polygon points="755.4,613.4 778.3,610.6 776.4,617.3 765.9,623.0 755.4,621.1" fill="#4a4a4a" stroke="#121212" stroke-width="0.5" stroke-linejoin="round" />
<polygon points="744.9,613.4 755.4,613.4 755.4,621.1 744.9,621.1" fill="#9e9e9e" stroke="#121212" stroke-width="0.6" stroke-linejoin="round" />
<rect x="679.500" y="587.300" width="21" height="24.200" rx="9" fill="#d4d4d4" stroke="#000" stroke-width="1"/>
<rect x="682" y="589.500" width="16" height="20" rx="7.500" fill="none" stroke="#222" stroke-width="0.600"/>
<polygon points="698.2,588.6 713.4,587.7 713.4,609.6 698.2,611.0" fill="#a4a4a4" stroke="#121212" stroke-width="0.6" stroke-linejoin="round" />
<polyline points="702.0,588.6 702.0,610.6" fill="none" stroke="#111" stroke-width="0.8"/>
<polyline points="707.7,588.1 707.7,610.1" fill="none" stroke="#111" stroke-width="0.8"/>
<polygon points="713.4,590.5 729.7,591.5 729.7,606.8 713.4,607.7" fill="#4a4a4a" stroke="#121212" stroke-width="0.5" stroke-linejoin="round" />
<polygon points="711.5,598.2 728.7,599.1 728.7,603.1 711.5,602.0" fill="#d2d2d2" stroke="#121212" stroke-width="0.6" stroke-linejoin="round" />
<polygon points="729.7,595.3 742.1,597.7 741.1,604.8 728.7,602.0" fill="#dcdcdc" stroke="#121212" stroke-width="0.6" stroke-linejoin="round" />
<polyline points="729.2,598.6 741.6,601.2" fill="none" stroke="#333" stroke-width="0.6"/>
<polygon points="738.2,576.7 780.2,574.3 780.2,598.2 743.0,598.2" fill="#4c4c4c" stroke="#121212" stroke-width="0.5" stroke-linejoin="round" />
<polygon points="747.8,576.4 750.8,576.2 750.8,598.2 747.8,598.2" fill="#c4c4c4" stroke="#121212" stroke-width="0.5" stroke-linejoin="round" />
<polygon points="756.4,575.7 759.4,575.6 759.4,596.7 756.4,596.7" fill="#c4c4c4" stroke="#121212" stroke-width="0.5" stroke-linejoin="round" />
<polygon points="770.7,579.1 780.2,578.6 780.2,591.5 770.7,592.0" fill="url(#cyl)" stroke="#121212" stroke-width="0.5" stroke-linejoin="round" />
<polygon points="743.0,598.2 776.9,598.2 776.9,609.6 743.0,610.1" fill="#1c1c1c" stroke="#121212" stroke-width="0.5" stroke-linejoin="round" />
<rect x="745.9" y="601.0" width="2.600" height="1.300" fill="#e6e6e6"/>
<rect x="751.6" y="603.4" width="2.600" height="1.300" fill="#e6e6e6"/>
<rect x="757.3" y="600.6" width="2.600" height="1.300" fill="#e6e6e6"/>
<rect x="763.1" y="603.9" width="2.600" height="1.300" fill="#e6e6e6"/>
<rect x="768.8" y="601.5" width="2.600" height="1.300" fill="#e6e6e6"/>
<rect x="773.5" y="604.8" width="2.600" height="1.300" fill="#e6e6e6"/>
<rect x="748.7" y="607.2" width="2.600" height="1.300" fill="#e6e6e6"/>
<rect x="755.4" y="607.7" width="2.600" height="1.300" fill="#e6e6e6"/>
<rect x="765.0" y="607.7" width="2.600" height="1.300" fill="#e6e6e6"/>
<rect x="771.6" y="608.2" width="2.600" height="1.300" fill="#e6e6e6"/>
<rect x="760.2" y="602.5" width="2.600" height="1.300" fill="#e6e6e6"/>
<path d="M540,639 L583,552 Q590,541 602,539.5 L693,524.5 Q701,524 701.5,532 L702,542 L617,566 Q604,570 598,580 L552,660 Q546,660 543,653 Z" fill="#484848" stroke="#121212" stroke-width="0.85" stroke-linejoin="round" />
<ellipse cx="639" cy="558" rx="3.6" ry="8" fill="#5a5a5a" stroke="#111" stroke-width="0.7" transform="rotate(-14 639 558)" />
<ellipse cx="640.5" cy="557.5" rx="3.4" ry="7.6" fill="#d6d6d6" stroke="#111" stroke-width="0.6" transform="rotate(-14 640.5 557.5)" />
<ellipse cx="646" cy="556.5" rx="3.6" ry="8" fill="#5a5a5a" stroke="#111" stroke-width="0.7" transform="rotate(-14 646 556.5)" />
<ellipse cx="647.5" cy="556" rx="3.4" ry="7.6" fill="#d6d6d6" stroke="#111" stroke-width="0.6" transform="rotate(-14 647.5 556)" />
<ellipse cx="648" cy="556" rx="1.6" ry="3.4" fill="#777" stroke="#111" stroke-width="0.4" transform="rotate(-14 648 556)" />
<ellipse cx="658" cy="554" rx="3.6" ry="8" fill="#5a5a5a" stroke="#111" stroke-width="0.7" transform="rotate(-14 658 554)" />
<ellipse cx="659.5" cy="553.5" rx="3.4" ry="7.6" fill="#d6d6d6" stroke="#111" stroke-width="0.6" transform="rotate(-14 659.5 553.5)" />
<ellipse cx="665" cy="552.5" rx="3.6" ry="8" fill="#5a5a5a" stroke="#111" stroke-width="0.7" transform="rotate(-14 665 552.5)" />
<ellipse cx="666.5" cy="552" rx="3.4" ry="7.6" fill="#d6d6d6" stroke="#111" stroke-width="0.6" transform="rotate(-14 666.5 552)" />
<ellipse cx="667" cy="552" rx="1.6" ry="3.4" fill="#777" stroke="#111" stroke-width="0.4" transform="rotate(-14 667 552)" />
<ellipse cx="678" cy="549" rx="3.6" ry="8" fill="#5a5a5a" stroke="#111" stroke-width="0.7" transform="rotate(-14 678 549)" />
<ellipse cx="679.5" cy="548.5" rx="3.4" ry="7.6" fill="#d6d6d6" stroke="#111" stroke-width="0.6" transform="rotate(-14 679.5 548.5)" />
<ellipse cx="685" cy="547.5" rx="3.6" ry="8" fill="#5a5a5a" stroke="#111" stroke-width="0.7" transform="rotate(-14 685 547.5)" />
<ellipse cx="686.5" cy="547" rx="3.4" ry="7.6" fill="#d6d6d6" stroke="#111" stroke-width="0.6" transform="rotate(-14 686.5 547)" />
<ellipse cx="687" cy="547" rx="1.6" ry="3.4" fill="#777" stroke="#111" stroke-width="0.4" transform="rotate(-14 687 547)" />
<ellipse cx="699" cy="543" rx="3.6" ry="8" fill="#5a5a5a" stroke="#111" stroke-width="0.7" transform="rotate(-14 699 543)" />
<ellipse cx="700.5" cy="542.5" rx="3.4" ry="7.6" fill="#d6d6d6" stroke="#111" stroke-width="0.6" transform="rotate(-14 700.5 542.5)" />
<ellipse cx="706" cy="541.5" rx="3.6" ry="8" fill="#5a5a5a" stroke="#111" stroke-width="0.7" transform="rotate(-14 706 541.5)" />
<ellipse cx="707.5" cy="541" rx="3.4" ry="7.6" fill="#d6d6d6" stroke="#111" stroke-width="0.6" transform="rotate(-14 707.5 541)" />
<ellipse cx="708" cy="541" rx="1.6" ry="3.4" fill="#777" stroke="#111" stroke-width="0.4" transform="rotate(-14 708 541)" />
<ellipse cx="720" cy="542" rx="3.6" ry="8" fill="#5a5a5a" stroke="#111" stroke-width="0.7" transform="rotate(-14 720 542)" />
<ellipse cx="721.5" cy="541.5" rx="3.4" ry="7.6" fill="#d6d6d6" stroke="#111" stroke-width="0.6" transform="rotate(-14 721.5 541.5)" />
<ellipse cx="727" cy="540.5" rx="3.6" ry="8" fill="#5a5a5a" stroke="#111" stroke-width="0.7" transform="rotate(-14 727 540.5)" />
<ellipse cx="728.5" cy="540" rx="3.4" ry="7.6" fill="#d6d6d6" stroke="#111" stroke-width="0.6" transform="rotate(-14 728.5 540)" />
<ellipse cx="729" cy="540" rx="1.6" ry="3.4" fill="#777" stroke="#111" stroke-width="0.4" transform="rotate(-14 729 540)" />
<polygon points="628.8,554.7 638.9,556.8 638.9,559.4 628.8,557.6" fill="#d0d0d0" stroke="#121212" stroke-width="0.5" stroke-linejoin="round" />
<path d="M620,642 L670,560 Q677,551 688,549 L776,537 Q782,537 782.5,543 L782.5,569.5 L700,583.5 Q687,586 681,594 L640,668 Q637,676 632,672 L620,655 Z" fill="#474747" stroke="#121212" stroke-width="0.85" stroke-linejoin="round" />
<ellipse cx="610" cy="560" rx="1.3" ry="1.3" fill="#0c0c0c" />
<ellipse cx="584" cy="578" rx="1.3" ry="1.3" fill="#0c0c0c" />
<ellipse cx="569" cy="605" rx="1.3" ry="1.3" fill="#0c0c0c" />
<ellipse cx="553" cy="633" rx="1.3" ry="1.3" fill="#0c0c0c" />
<ellipse cx="664" cy="589" rx="1.3" ry="1.3" fill="#0c0c0c" />
<ellipse cx="649" cy="619" rx="1.3" ry="1.3" fill="#0c0c0c" />
<ellipse cx="633" cy="649" rx="1.3" ry="1.3" fill="#0c0c0c" />
<ellipse cx="690" cy="571" rx="1.3" ry="1.3" fill="#0c0c0c" />
<ellipse cx="718" cy="566" rx="1.3" ry="1.3" fill="#0c0c0c" />
<ellipse cx="745" cy="562" rx="1.3" ry="1.3" fill="#0c0c0c" />
<ellipse cx="772" cy="557" rx="1.3" ry="1.3" fill="#0c0c0c" />
<polygon points="636.2,655.0 665.0,661.2 665.0,666.2 636.2,661.2" fill="#c8c8c8" stroke="#121212" stroke-width="0.5" stroke-linejoin="round" />
<polygon points="667.5,646.2 675.0,642.5 690.0,638.8 693.8,641.2 692.5,645.5 680.0,647.0 678.8,662.5 667.5,662.5" fill="#9a9a9a" stroke="#121212" stroke-width="0.6" stroke-linejoin="round" />
<polygon points="675.0,651.2 690.0,652.5 690.0,665.0 675.0,663.8" fill="#3a3a3a" stroke="#121212" stroke-width="0.4" stroke-linejoin="round" />
<polygon points="633.4,681.8 804.6,696.8 804.6,726.8 620.0,700.1" fill="#bcbcbc" stroke="#121212" stroke-width="0.4" stroke-linejoin="round" />
<polygon points="805.1,690.1 909.0,675.1 912.7,706.8 900.6,712.2 807.1,704.3" fill="#4c4c4c" stroke="#121212" stroke-width="0.4" stroke-linejoin="round" />
<polygon points="643.8,671.7 670.1,665.1 710.2,656.7 772.0,654.2 770.4,676.7 805.4,691.8 797.1,695.9 643.8,675.9" fill="#8e8e8e" stroke="#121212" stroke-width="0.6" stroke-linejoin="round" />
<polygon points="643.8,672.5 798.8,693.8 798.8,699.5 643.8,678.8" fill="#c4c4c4" stroke="#121212" stroke-width="0.5" stroke-linejoin="round" />
<polygon points="726.2,672.5 771.2,666.2 771.2,677.5 740.0,676.2" fill="#555" stroke="#121212" stroke-width="0.4" stroke-linejoin="round" />
<ellipse cx="672.5" cy="673.0" rx="1.6" ry="0.7" fill="#222" />
<ellipse cx="690.0" cy="675.0" rx="1.6" ry="0.7" fill="#222" />
<ellipse cx="707.5" cy="677.5" rx="1.6" ry="0.7" fill="#222" />
<ellipse cx="725.0" cy="679.5" rx="1.6" ry="0.7" fill="#222" />
<ellipse cx="745.0" cy="681.2" rx="1.6" ry="0.7" fill="#222" />
<ellipse cx="765.0" cy="684.0" rx="1.6" ry="0.7" fill="#222" />
<ellipse cx="782.5" cy="687.0" rx="1.6" ry="0.7" fill="#222" />
<polygon points="632.5,682.5 803.8,705.0 803.8,720.0 632.5,697.5" fill="#b8b8b8" stroke="#121212" stroke-width="0.5" stroke-linejoin="round" />
<polygon points="656.2,682.5 662.5,683.2 662.5,700.0 656.2,699.0" fill="#d6d6d6" stroke="#121212" stroke-width="0.4" stroke-linejoin="round" />
<polygon points="692.5,687.5 700.0,688.5 700.0,705.0 692.5,704.0" fill="#d6d6d6" stroke="#121212" stroke-width="0.4" stroke-linejoin="round" />
<polygon points="717.5,691.2 723.8,692.0 723.8,708.0 717.5,707.0" fill="#d6d6d6" stroke="#121212" stroke-width="0.4" stroke-linejoin="round" />
<polygon points="753.8,695.5 761.2,696.5 761.2,712.5 753.8,711.5" fill="#d6d6d6" stroke="#121212" stroke-width="0.4" stroke-linejoin="round" />
<polygon points="700.0,692.5 717.5,695.0 717.5,703.8 700.0,701.2" fill="#4a4a4a" stroke="#121212" stroke-width="0.4" stroke-linejoin="round" />
<polygon points="761.2,701.2 782.5,704.2 782.5,712.5 761.2,709.5" fill="#4a4a4a" stroke="#121212" stroke-width="0.4" stroke-linejoin="round" />
<polygon points="632.5,685.0 655.0,688.0 655.0,693.8 632.5,691.2" fill="#5a5a5a" stroke="#121212" stroke-width="0.4" stroke-linejoin="round" />
<polygon points="620.0,693.0 632.5,690.0 803.8,717.0 803.8,727.5 782.5,730.0 620.0,702.5" fill="#9a9a9a" stroke="#121212" stroke-width="0.6" stroke-linejoin="round" />
<polygon points="620.0,699.0 782.5,723.0 782.5,731.0 620.0,708.8" fill="#c2c2c2" stroke="#121212" stroke-width="0.5" stroke-linejoin="round" />
<polygon points="771.8,721.5 803.8,718.0 803.8,728.0 782.5,731.0 771.8,730.5" fill="#6e6e6e" stroke="#121212" stroke-width="0.5" stroke-linejoin="round" />
<polygon points="771.8,721.5 782.5,723.0 782.5,731.0 771.8,730.5" fill="#9a9a9a" stroke="#121212" stroke-width="0.5" stroke-linejoin="round" />
<polygon points="619.5,708.8 640.5,712.5 640.5,724.5 618.8,723.2" fill="#c6c6c6" stroke="#121212" stroke-width="0.5" stroke-linejoin="round" />
<polyline points="633.8,711.5 633.8,724.2" fill="none" stroke="#111" stroke-width="0.7"/>
<polygon points="640.5,713.0 690.0,721.2 672.5,725.8 640.5,724.5" fill="#505050" stroke="#121212" stroke-width="0.4" stroke-linejoin="round" />
<polygon points="607.5,727.5 708.8,720.5 710.0,723.0 650.0,734.5 612.5,734.5" fill="#8e8e8e" stroke="#121212" stroke-width="0.6" stroke-linejoin="round" />
<polygon points="607.5,727.5 650.0,731.5 650.0,734.5 612.5,734.5" fill="#c4c4c4" stroke="#121212" stroke-width="0.5" stroke-linejoin="round" />
<polygon points="708.3,720.5 771.4,729.9 771.4,731.9 740.6,731.9 740.6,725.9 697.9,725.9" fill="#474747" stroke="#121212" stroke-width="0.4" stroke-linejoin="round" />
<polygon points="670.8,730.8 690.6,727.7 695.3,735.0" fill="#c4c4c4" stroke="#121212" stroke-width="0.4" stroke-linejoin="round" />
<path d="M633.75,738.75 L707.5,862.5 L737.5,858.75 L741,727.5 L695,726 L726,780 Q728,800 710,807.5 L667.5,733.75 Z" fill="#474747" stroke="#121212" stroke-width="0.85" stroke-linejoin="round" />
<path d="M633.75,738.75 L637,736 L711,860 L707.5,862.5 Z" fill="#8a8a8a" stroke="#121212" stroke-width="0.4" stroke-linejoin="round" />
<path d="M692,727 L697,726 L727,778 Q729,801 711,809 L709.5,806.5 Q725,798 723.5,781 Z" fill="#cdcdcd" stroke="#121212" stroke-width="0.5" stroke-linejoin="round" />
<path d="M741,727.5 L788.75,730 L788.75,762.5 L835,837.5 L780,830 Q769,831 767.5,841 L772.5,863.75 L737.5,858.75 Z" fill="#bcbcbc" stroke="#121212" stroke-width="0.85" stroke-linejoin="round" />
<path d="M780,830 Q769,831 767.5,841 L772.5,863.75 L768.5,864 L764,841 Q765,829 777,827.5 Z" fill="#8c8c8c" stroke="#121212" stroke-width="0.4" stroke-linejoin="round" />
<ellipse cx="771" cy="740" rx="3" ry="3.6" fill="#5a5a5a" stroke="#1c1c1c" stroke-width="0.8" />
<ellipse cx="776" cy="757.5" rx="4" ry="3.8" fill="#3e5580" stroke="#1c1c1c" stroke-width="0.6" transform="rotate(20 776 757.5)" />
<polygon points="775.0,733.8 788.8,733.8 788.8,753.8 777.5,753.8" fill="#c8c8c8" stroke="#121212" stroke-width="0.4" stroke-linejoin="round" />
<polygon points="788.8,729.5 808.0,728.0 808.0,760.5 788.8,763.8" fill="#bcbcbc" stroke="#121212" stroke-width="0.5" stroke-linejoin="round" />
<path d="M790,763.75 L863.75,885 L896,881 L902.5,711 L806,701 L806,758 Z" fill="#474747" stroke="#121212" stroke-width="0.85" stroke-linejoin="round" />
<path d="M790,763.75 L794,761.5 L868,884 L863.75,885 Z" fill="#8a8a8a" stroke="#121212" stroke-width="0.4" stroke-linejoin="round" />
<path d="M893,881.5 L896,881 L902.5,711 L899,710.5 Z" fill="#5e5e5e" stroke="#121212" stroke-width="0.3" stroke-linejoin="round" />
<path d="M846,785 Q849,772 856,767.5 L882.5,797.5 Q884,820 870,830 Q866,832 862,826 L848,800 Q845,792 846,785 Z" fill="#bcbcbc" stroke="#121212" stroke-width="0.6" stroke-linejoin="round" />
<path d="M856,767.5 L860,766 L886,796 Q888,822 872,832 Q868,833 866,831 Q880,820 878.5,799 L853,770 Z" fill="#cdcdcd" stroke="#121212" stroke-width="0.5" stroke-linejoin="round" />
<polygon points="806.2,695.0 867.5,690.0 867.5,755.0 808.0,760.5" fill="#aaaaaa" stroke="#121212" stroke-width="0.5" stroke-linejoin="round" />
<polygon points="830.0,697.5 845.0,696.2 843.8,757.5 828.8,758.8" fill="#6a6a6a" stroke="#121212" stroke-width="0.4" stroke-linejoin="round" />
<polygon points="845.0,696.2 851.2,695.5 850.0,757.0 843.8,757.5" fill="#d2d2d2" stroke="#121212" stroke-width="0.4" stroke-linejoin="round" />
<polygon points="860.0,695.0 870.0,693.8 868.8,755.0 858.8,756.2" fill="#3c3c3c" stroke="#121212" stroke-width="0.4" stroke-linejoin="round" />
<rect x="855.0" y="697.8" width="18" height="12" rx="5" fill="#d6d6d6" stroke="#222" stroke-width="0.6"/>
<ellipse cx="875.0" cy="703.8" rx="7" ry="7.5" fill="#9a9a9a" stroke="#111" stroke-width="0.8" />
<ellipse cx="876.0" cy="703.8" rx="4" ry="4.5" fill="#d0d0d0" stroke="#111" stroke-width="0.6" />
<rect x="852.5" y="742.0" width="18" height="12" rx="5" fill="#d6d6d6" stroke="#222" stroke-width="0.6"/>
<ellipse cx="872.5" cy="748.0" rx="7" ry="7.5" fill="#9a9a9a" stroke="#111" stroke-width="0.8" />
<ellipse cx="873.5" cy="748.0" rx="4" ry="4.5" fill="#d0d0d0" stroke="#111" stroke-width="0.6" />
<polygon points="805.0,693.8 908.8,676.2 912.5,678.8 912.5,685.0 807.5,701.2" fill="#555" stroke="#121212" stroke-width="0.6" stroke-linejoin="round" />
<polygon points="882.5,698.8 912.5,701.2 912.5,706.2 882.5,712.5" fill="#6a6a6a" stroke="#121212" stroke-width="0.5" stroke-linejoin="round" />
<polygon points="761.2,482.5 795.0,478.8 811.2,485.0 811.2,540.0 761.2,540.0" fill="#b9b9b9" stroke="#121212" stroke-width="0.6" stroke-linejoin="round" />
<polygon points="768.8,492.5 807.5,497.5 807.5,535.0 768.8,530.0" fill="#5c5c5c" stroke="#121212" stroke-width="0.4" stroke-linejoin="round" />
<polygon points="775.0,497.5 783.8,498.5 783.8,530.0 775.0,529.0" fill="#c8c8c8" stroke="#121212" stroke-width="0.4" stroke-linejoin="round" />
<polygon points="787.5,500.0 810.0,503.0 810.0,510.0 787.5,507.0" fill="#c8c8c8" stroke="#121212" stroke-width="0.4" stroke-linejoin="round" />
<polygon points="761.2,482.5 795.0,478.8 811.2,485.0 777.5,489.5" fill="#9a9a9a" stroke="#121212" stroke-width="0.5" stroke-linejoin="round" />
<polygon points="798.8,455.0 803.8,455.0 803.8,485.0 798.8,485.0" fill="#bdbdbd" stroke="#121212" stroke-width="0.5" stroke-linejoin="round" />
<ellipse cx="794.2" cy="463.8" rx="6" ry="5.5" fill="#2e2e2e" stroke="#000" stroke-width="0.8" />
<ellipse cx="798.2" cy="463.8" rx="5.5" ry="5" fill="#8a8a8a" stroke="#000" stroke-width="0.7" />
<ellipse cx="798.7" cy="463.8" rx="2.6" ry="2.4" fill="#d8d8d8" stroke="#111" stroke-width="0.4" />
<ellipse cx="795.5" cy="482.5" rx="6" ry="5.5" fill="#2e2e2e" stroke="#000" stroke-width="0.8" />
<ellipse cx="799.5" cy="482.5" rx="5.5" ry="5" fill="#8a8a8a" stroke="#000" stroke-width="0.7" />
<ellipse cx="800.0" cy="482.5" rx="2.6" ry="2.4" fill="#d8d8d8" stroke="#111" stroke-width="0.4" />
<polygon points="785.0,516.2 808.8,510.0 803.8,580.0 803.8,690.0 771.2,672.5 775.0,630.0" fill="#c2c2c2" stroke="#121212" stroke-width="0.6" stroke-linejoin="round" />
<polygon points="812.5,455.0 822.5,441.2 830.0,442.5 821.2,462.5 811.2,691.2 803.8,690.0 803.8,580.0" fill="#b4b4b4" stroke="#121212" stroke-width="0.6" stroke-linejoin="round" />
<path d="M832.5,442.5 L909,428.3 Q913,432 913.6,440 L907.5,676.25 L810,691.25 L812.5,642 L820.5,462 Q822,456 824,453 Z" fill="#464646" stroke="#000" stroke-width="1" stroke-linejoin="round" />
<path d="M849,478 Q850,460 866,460 Q882,461 882,478 L875,645 Q874,661 860,661 Q844,660 844,643 Z" fill="#8f8f8f" stroke="#121212" stroke-width="0.7" stroke-linejoin="round" />
<polygon points="849.9,479.8 871.6,481.4 871.3,504.3 848.4,502.7" fill="#a6a6a6" stroke="#121212" stroke-width="0.5" stroke-linejoin="round" />
<polygon points="851.5,482.9 871.3,485.2 871.3,490.5 851.1,488.2" fill="#c6c6c6" stroke="#121212" stroke-width="0.4" stroke-linejoin="round" />
<polygon points="846.9,505.8 860.6,505.8 857.6,620.0 845.3,620.0" fill="#505050" stroke="#121212" stroke-width="0.5" stroke-linejoin="round" />
<polygon points="847.6,524.1 853.7,524.1 851.5,580.6 845.3,580.6" fill="#c4c4c4" stroke="#121212" stroke-width="0.5" stroke-linejoin="round" />
<polygon points="859.1,505.8 871.6,505.8 870.1,557.7 858.3,557.7" fill="#bdbdbd" stroke="#121212" stroke-width="0.5" stroke-linejoin="round" />
<polygon points="859.8,542.4 871.0,543.7 870.7,551.6 859.5,550.1" fill="#8a8a8a" stroke="#121212" stroke-width="0.4" stroke-linejoin="round" />
<polygon points="857.6,563.8 869.8,565.3 868.5,620.0 856.0,620.0" fill="#b5b5b5" stroke="#121212" stroke-width="0.5" stroke-linejoin="round" />
<polygon points="845.3,602.0 857.6,600.5 857.3,612.7 845.0,614.2" fill="#5a5a5a" stroke="#121212" stroke-width="0.4" stroke-linejoin="round" />
<path d="M844,600 L866,600 L866,655 L860,661 Q844,660 844,643 Z" fill="#7a7a7a" stroke="#121212" stroke-width="0.4" stroke-linejoin="round" />
<path d="M866,460 Q882,461 882,478 L875,645 Q874.5,655 869,659.5 L866,650 L871.5,480 Q871,468 862,461 Z" fill="#b9b9b9" stroke="#121212" stroke-width="0.6" stroke-linejoin="round" />
<path d="M849,478 Q850,460 866,460 Q882,461 882,478 L875,645 Q874,661 860,661 Q844,660 844,643 Z" fill="none" stroke="#121212" stroke-width="0.9" stroke-linejoin="round" />
<ellipse cx="837" cy="458" rx="0.9" ry="0.9" fill="#cfcfcf" stroke="#222" stroke-width="0.3" />
<ellipse cx="897" cy="449" rx="0.9" ry="0.9" fill="#cfcfcf" stroke="#222" stroke-width="0.3" />
<ellipse cx="835" cy="500" rx="0.9" ry="0.9" fill="#cfcfcf" stroke="#222" stroke-width="0.3" />
<ellipse cx="895" cy="491" rx="0.9" ry="0.9" fill="#cfcfcf" stroke="#222" stroke-width="0.3" />
<ellipse cx="833" cy="545" rx="0.9" ry="0.9" fill="#cfcfcf" stroke="#222" stroke-width="0.3" />
<ellipse cx="893" cy="536" rx="0.9" ry="0.9" fill="#cfcfcf" stroke="#222" stroke-width="0.3" />
<ellipse cx="830" cy="590" rx="0.9" ry="0.9" fill="#cfcfcf" stroke="#222" stroke-width="0.3" />
<ellipse cx="891" cy="582" rx="0.9" ry="0.9" fill="#cfcfcf" stroke="#222" stroke-width="0.3" />
<ellipse cx="829" cy="630" rx="0.9" ry="0.9" fill="#cfcfcf" stroke="#222" stroke-width="0.3" />
<ellipse cx="889" cy="622" rx="0.9" ry="0.9" fill="#cfcfcf" stroke="#222" stroke-width="0.3" />
<ellipse cx="827" cy="665" rx="0.9" ry="0.9" fill="#cfcfcf" stroke="#222" stroke-width="0.3" />
<ellipse cx="887" cy="655" rx="0.9" ry="0.9" fill="#cfcfcf" stroke="#222" stroke-width="0.3" />
<ellipse cx="817" cy="563" rx="0.9" ry="0.9" fill="#cfcfcf" stroke="#222" stroke-width="0.3" />
<ellipse cx="818" cy="600" rx="0.9" ry="0.9" fill="#cfcfcf" stroke="#222" stroke-width="0.3" />
<polygon points="793.8,427.5 870.0,415.0 910.0,421.2 832.5,436.2" fill="#9a9a9a" stroke="#121212" stroke-width="0.85" stroke-linejoin="round" />
<polygon points="793.8,427.5 832.5,436.2 832.5,443.0 795.0,435.5" fill="#c6c6c6" stroke="#121212" stroke-width="0.6" stroke-linejoin="round" />
<polygon points="832.5,436.2 910.0,421.2 908.8,429.2 832.5,443.0" fill="#4a4a4a" stroke="#121212" stroke-width="0.6" stroke-linejoin="round" />
<rect x="831" y="406" width="11" height="13" fill="url(#cyl)" stroke="#222" stroke-width="0.5"/>
<ellipse cx="836.5" cy="406" rx="5.5" ry="1.8" fill="#c8c8c8" stroke="#1c1c1c" stroke-width="0.5" />
<ellipse cx="862" cy="413" rx="4" ry="1.5" fill="#ccc" stroke="#1c1c1c" stroke-width="0.5" />
<ellipse cx="812" cy="421" rx="4" ry="1.5" fill="#ccc" stroke="#1c1c1c" stroke-width="0.5" />
<polygon points="912.5,487.5 922.5,486.2 922.5,585.0 910.0,587.5" fill="#4c4c4c" stroke="#121212" stroke-width="0.5" stroke-linejoin="round" />
<path d="M972.5,338 L960,705 A19.5,3.51 0 0 0 999,705 L1011,338 Z" fill="url(#cyl)"/>
<path d="M1184,312 L1172,621 A20.0,3.5999999999999996 0 0 0 1212,621 L1222.5,312 Z" fill="url(#cyl)"/>
<polygon points="1016,217.2 771.2,256.8 1003.8,291.0 1249.2,250.5" fill="#8b8b8b" stroke="#000" stroke-width="1" stroke-linejoin="round" />
<polygon points="771.2,256.8 1003.8,291.0 1002.5,343.0 769.6,310" fill="#b8b8b8" stroke="#000" stroke-width="1" stroke-linejoin="round" />
<polygon points="1003.8,291.0 1249.2,250.5 1247.7,304 1002.5,343.0" fill="#464646" stroke="#000" stroke-width="1" stroke-linejoin="round" />
<ellipse cx="1010" cy="253.5" rx="50" ry="8.2" fill="url(#hole)" stroke="#1c1c1c" stroke-width="0.7" transform="rotate(1.5 1010 253.5)" />
<ellipse cx="813.5" cy="257.6" rx="20" ry="3.2" fill="#8f8f8f" stroke="#0a0a0a" stroke-width="0.9" transform="rotate(2 813.5 257.6)" />
<ellipse cx="1025.6" cy="223.4" rx="20" ry="3.2" fill="#8f8f8f" stroke="#0a0a0a" stroke-width="0.9" transform="rotate(2 1025.6 223.4)" />
<ellipse cx="995" cy="283.3" rx="20" ry="3.2" fill="#8f8f8f" stroke="#0a0a0a" stroke-width="0.9" transform="rotate(2 995 283.3)" />
<ellipse cx="1205.5" cy="248.5" rx="20" ry="3.2" fill="#8f8f8f" stroke="#0a0a0a" stroke-width="0.9" transform="rotate(2 1205.5 248.5)" />
<ellipse cx="949.5" cy="252.8" rx="4.5" ry="1.3" fill="#222" />
<ellipse cx="1000.0" cy="244.5" rx="4.5" ry="1.3" fill="#222" />
<ellipse cx="1070.5" cy="254.0" rx="4.5" ry="1.3" fill="#222" />
<ellipse cx="1019.5" cy="262.5" rx="4.5" ry="1.3" fill="#222" />
<path d="M748,644 L748.4,622" stroke="#35c8d2" stroke-width="2.2"/>
<path d="M748,644 L772.7,647.5" stroke="#2ed83a" stroke-width="2.4"/>
<path d="M746,644 L736,645.5" stroke="#c83838" stroke-width="1.8"/><path d="M728.500,646.300 l6,-3.800 l0.800,7 z" fill="#c83a3a"/>
<circle cx="747.7" cy="644" r="3.4" fill="#8a8a8a"/>
<g opacity="0.92">
<defs><linearGradient id="og" x1="0" y1="0" x2="0" y2="1"><stop offset="0" stop-color="#f06a1e"/><stop offset="1" stop-color="#f8a81a"/></linearGradient></defs>
<path d="M891.5,517 h2 v20.5 h10 l2,2.2 h-14 z M895,512 h2 v23 l7,1 v1 h-9 z M899,508.5 h2.2 v25.5 l4,2 h-6.2 z" fill="url(#og)"/>
<path d="M936,517 h-2 v20.5 h-10 l-2,2.2 h14 z M932.5,512 h-2 v23 l-7,1 v1 h9 z M928.5,508.5 h-2.200 v25.5 l-4,2 h6.200 z" fill="url(#og)"/>
<path d="M913.5,511 a9.500,9.500 0 0 0 -7,16.500 q-1.500,-9 6,-10.500 q4,2.500 2.500,8 l-1.500,6.500 q9,-2 9.500,-11 q-0.500,-6 -4.500,-8.500 q1.500,4 0,6.500 q-1.500,-5 -5,-7.500z" fill="url(#og)"/>
<path d="M912.5,537 a9.500,9.500 0 0 0 9.500,-12 q-1,6 -7,8.500z" fill="#f07a1c"/>
<rect x="909" y="537.500" width="9" height="1.800" fill="#f28a1c"/>
<text x="946.500" y="528.500" font-size="16.500" font-weight="bold" fill="#f58a28" textLength="82.500" lengthAdjust="spacingAndGlyphs">智造资料网</text>
<text x="947" y="537.800" font-size="4.600" font-weight="bold" fill="#f59a38" textLength="81.500" lengthAdjust="spacingAndGlyphs">INTELLIGENT MANUFACTURING DATA</text>
</g>
<g>
<path d="M105,945 V921 Q105,918.500 107.500,918.500 L113,917.500 L123,916.500 L132,918 L139,918.500 Q141.500,918.500 141.500,921 V945 Z" fill="#8fa0bd" fill-opacity="0.450" stroke="#c9ccd2" stroke-width="0.800"/>
<path d="M108,945.500 L128,948 L140,946" fill="none" stroke="#e8d820" stroke-width="1.200"/>
<path d="M120.300,941 L122.400,876" stroke="#18d6e6" stroke-width="3"/>
<path d="M122.600,868 L118.500,877 L126.500,877 Z" fill="#18e0f0"/>
<path d="M121,942 L150,946" stroke="#18d020" stroke-width="3"/>
<path d="M160,947.300 L150,942.500 L150.500,950.500 Z" fill="#10b818"/>
<path d="M119,942.500 L108,944.500" stroke="#c01010" stroke-width="3"/>
<path d="M99.500,945.200 L106.500,940.500 L107.500,948.500 Z" fill="#d01414"/>
<circle cx="120.200" cy="941" r="3.300" fill="#8c8c8c"/>
<text x="118" y="864.500" font-size="11.500" fill="#d4d6da">Z</text>
<text x="91" y="951" font-size="11.500" fill="#d4d6da">X</text>
<text x="161.500" y="952" font-size="11.500" fill="#d4d6da">Y</text>
</g>
<g id="ime">
<rect x="1747" y="793.500" width="157" height="70.500" rx="9" fill="#b9d6ea"/>
<rect x="1731.500" y="800.500" width="170" height="57.500" rx="8" fill="#fff" stroke="#1e86c8" stroke-width="2"/>
<text x="1743" y="825" font-size="20" font-weight="bold" fill="#000">A</text>
<path d="M1781.500,811 a8,8 0 1 1 -6.500,12.500 a6.200,6.200 0 0 0 6.500,-12.500 z" fill="#000"/>
<text x="1745" y="845" font-size="13" font-weight="bold" fill="#000">,</text>
<rect x="1758" y="848" width="2" height="2" fill="#000"/>
<path d="M1772.500,838.500 h18 l1,6 h-4.500 v7.500 h-11 v-7.500 h-4.500 z" fill="#000"/>
<circle cx="1893.500" cy="822.500" r="4.600" fill="#e6002d"/>
<!-- doraemon -->
<path d="M1850,840 Q1872,818 1892,832 Q1900,842 1897,856 L1852,862 Q1842,858 1850,840 Z" fill="#0c93dc" stroke="#555" stroke-width="0.500"/>
<ellipse cx="1903" cy="851" rx="14" ry="10" fill="#fff" stroke="#777" stroke-width="0.500" transform="rotate(28 1903 851)"/>
<path d="M1808,848 Q1830,838 1868,846 L1866,862 L1812,862 Z" fill="#0c93dc"/>
<circle cx="1841" cy="826" r="32.500" fill="#0c93dc" stroke="#555" stroke-width="0.500"/>
<ellipse cx="1836" cy="832" rx="29" ry="24" fill="#fff" stroke="#888" stroke-width="0.400" transform="rotate(-12 1836 832)"/>
<ellipse cx="1835.500" cy="805" rx="7.500" ry="9" fill="#fff" stroke="#666" stroke-width="0.500" transform="rotate(-10 1835 805)"/>
<ellipse cx="1849" cy="809" rx="7.500" ry="9" fill="#fff" stroke="#666" stroke-width="0.500" transform="rotate(-10 1849 809)"/>
<path d="M1833,806 q3,4 7,1" fill="none" stroke="#000" stroke-width="0.900"/>
<ellipse cx="1844" cy="810.500" rx="1.600" ry="2.300" fill="#000"/>
<circle cx="1835" cy="814.500" r="4.300" fill="#e60012"/><circle cx="1836.200" cy="813" r="1.200" fill="#fff"/>
<path d="M1834,819 Q1830,830 1826,838 M1810,822 Q1830,846 1860,834" fill="none" stroke="#7a6a60" stroke-width="0.700"/>
<path d="M1811,811 l12,5 M1808,818 l14,2 M1810,826 l12,-2 M1841,824 l20,-2 M1841,828 l20,4 M1840,832 l16,9" fill="none" stroke="#7a6a60" stroke-width="0.600"/>
<ellipse cx="1813" cy="840" rx="7" ry="6" fill="#fff" stroke="#777" stroke-width="0.500"/>
<ellipse cx="1847" cy="855" rx="8" ry="6.500" fill="#fff" stroke="#777" stroke-width="0.500"/>
<path d="M1824,850 Q1838,858 1846,858" fill="none" stroke="#d8141c" stroke-width="2"/>
<path d="M1829,856 h9 l-1,7 h-6 z" fill="#f0c820" stroke="#a08010" stroke-width="0.400"/>
</g>
<g id="net">
<rect x="1813" y="863.500" width="89.500" height="40" rx="20" fill="#232a3e"/>
<path d="M1840,883.500 h62" stroke="#3a4258" stroke-width="0.800"/>
<circle cx="1813" cy="883" r="28.700" fill="#343d55" stroke="#262d42" stroke-width="1.600"/>
<path d="M1813,857.500 a25.500,25.500 0 0 1 22,38" fill="none" stroke="#3ed8b8" stroke-width="1.600"/>
<path d="M1835,895.500 a25.500,25.500 0 0 1 -20,13" fill="none" stroke="#9ad860" stroke-width="1.600"/>
<path d="M1815,908.500 a25.500,25.500 0 0 1 -27,-26" fill="none" stroke="#e8c040" stroke-width="1.600"/>
<text x="1797.500" y="891" font-size="25" fill="#f2f2f2" font-weight="normal" textLength="27" lengthAdjust="spacingAndGlyphs">75</text>
<text x="1824" y="891" font-size="11" fill="#f2f2f2">%</text>
<path d="M1849.500,875.500 v-5.500 m-3,2.500 l3,-3 l3,3" fill="none" stroke="#58b8f0" stroke-width="1.400"/>
<path d="M1849.500,890 v5.500 m-3,-2.500 l3,3 l3,-3" fill="none" stroke="#28c038" stroke-width="1.400"/>
<text x="1863" y="876.500" font-size="11.500" fill="#fff">1.1<tspan font-size="8.500" fill="#c8ccd8">K/s</tspan></text>
<text x="1863" y="897.500" font-size="11.500" fill="#fff">1.2<tspan font-size="8.500" fill="#c8ccd8">K/s</tspan></text>
</g>

</svg>
<svg id="chrome" width="1920" height="1048" viewBox="0 0 1920 1048" style="position:absolute;left:0;top:0">
<rect x="0" y="0" width="1920" height="23" fill="#fff" />
<rect x="0" y="23" width="1920" height="86" fill="#d6dbe9" />
<rect x="0" y="42" width="9" height="67" fill="#475a85" />
<rect x="9" y="64" width="1911" height="45" fill="#d6dbe9" />
<path d="M1799.5 10.5h10" stroke="#000" fill="none"/>
<path d="M1844.5 7.5h7v7h-7z M1846.5 7.5v-2h7v7h-2" stroke="#000" fill="none"/>
<path d="M1890 5.5l10 10M1900 5.5l-10 10" stroke="#000" stroke-width="1.1" fill="none"/>
<path d="M1870.5 36.5h9" stroke="#8a8fa0" fill="none"/>
<path d="M1888.5 30.5h5v5h-5z M1890.5 30.5v-2h5v5h-2" stroke="#8a8fa0" fill="none"/>
<path d="M1906 28.5l8 8M1914 28.5l-8 8" stroke="#8a8fa0" fill="none"/>
<rect x="12.5" y="44.5" width="18" height="20" fill="#f4f7fc" stroke="#b9c0d4" stroke-width="1"/>
<path d="M17 52h8l-4 4z" fill="#000"/>
<rect x="64.5" y="44.5" width="34" height="21" fill="#e9effa" stroke="#a09c8c" stroke-width="1"/>
<rect x="98.5" y="44.5" width="46" height="21" fill="#e9effa" stroke="#a09c8c" stroke-width="1"/>
<rect x="144.5" y="44.5" width="34" height="21" fill="#e9effa" stroke="#a09c8c" stroke-width="1"/>
<rect x="178.5" y="44.5" width="34" height="21" fill="#e9effa" stroke="#a09c8c" stroke-width="1"/>
<rect x="212.5" y="44.5" width="34" height="21" fill="#e9effa" stroke="#a09c8c" stroke-width="1"/>
<rect x="246.5" y="44.5" width="34" height="21" fill="#e9effa" stroke="#a09c8c" stroke-width="1"/>
<rect x="280.5" y="44.5" width="34" height="21" fill="#e9effa" stroke="#a09c8c" stroke-width="1"/>
<rect x="314.5" y="44.5" width="34" height="21" fill="#e9effa" stroke="#a09c8c" stroke-width="1"/>
<rect x="348.5" y="44.5" width="34" height="21" fill="#e9effa" stroke="#a09c8c" stroke-width="1"/>
<rect x="382.5" y="44.5" width="34" height="21" fill="#e9effa" stroke="#a09c8c" stroke-width="1"/>
<rect x="30.5" y="42.5" width="34" height="23" fill="#bcd9f8" stroke="#8ea4c0" stroke-width="1"/>
<rect x="9" y="64" width="1911" height="45" fill="#d6dbe9" />
<rect x="13" y="66" width="2" height="1" fill="#f5f7fb"/><rect x="14" y="67" width="2" height="1" fill="#a9afc0"/>
<rect x="13" y="69" width="2" height="1" fill="#f5f7fb"/><rect x="14" y="70" width="2" height="1" fill="#a9afc0"/>
<rect x="13" y="72" width="2" height="1" fill="#f5f7fb"/><rect x="14" y="73" width="2" height="1" fill="#a9afc0"/>
<rect x="13" y="75" width="2" height="1" fill="#f5f7fb"/><rect x="14" y="76" width="2" height="1" fill="#a9afc0"/>
<rect x="13" y="78" width="2" height="1" fill="#f5f7fb"/><rect x="14" y="79" width="2" height="1" fill="#a9afc0"/>
<rect x="13" y="81" width="2" height="1" fill="#f5f7fb"/><rect x="14" y="82" width="2" height="1" fill="#a9afc0"/>
<rect x="13" y="84" width="2" height="1" fill="#f5f7fb"/><rect x="14" y="85" width="2" height="1" fill="#a9afc0"/>
<rect x="13" y="87" width="2" height="1" fill="#f5f7fb"/><rect x="14" y="88" width="2" height="1" fill="#a9afc0"/>
<rect x="13" y="90" width="2" height="1" fill="#f5f7fb"/><rect x="14" y="91" width="2" height="1" fill="#a9afc0"/>
<rect x="13" y="93" width="2" height="1" fill="#f5f7fb"/><rect x="14" y="94" width="2" height="1" fill="#a9afc0"/>
<rect x="13" y="96" width="2" height="1" fill="#f5f7fb"/><rect x="14" y="97" width="2" height="1" fill="#a9afc0"/>
<rect x="13" y="99" width="2" height="1" fill="#f5f7fb"/><rect x="14" y="100" width="2" height="1" fill="#a9afc0"/>
<rect x="13" y="102" width="2" height="1" fill="#f5f7fb"/><rect x="14" y="103" width="2" height="1" fill="#a9afc0"/>
<rect x="13" y="105" width="2" height="1" fill="#f5f7fb"/><rect x="14" y="106" width="2" height="1" fill="#a9afc0"/>
<rect x="263" y="66" width="2" height="1" fill="#f5f7fb"/><rect x="264" y="67" width="2" height="1" fill="#a9afc0"/>
<rect x="263" y="69" width="2" height="1" fill="#f5f7fb"/><rect x="264" y="70" width="2" height="1" fill="#a9afc0"/>
<rect x="263" y="72" width="2" height="1" fill="#f5f7fb"/><rect x="264" y="73" width="2" height="1" fill="#a9afc0"/>
<rect x="263" y="75" width="2" height="1" fill="#f5f7fb"/><rect x="264" y="76" width="2" height="1" fill="#a9afc0"/>
<rect x="263" y="78" width="2" height="1" fill="#f5f7fb"/><rect x="264" y="79" width="2" height="1" fill="#a9afc0"/>
<rect x="263" y="81" width="2" height="1" fill="#f5f7fb"/><rect x="264" y="82" width="2" height="1" fill="#a9afc0"/>
<rect x="263" y="84" width="2" height="1" fill="#f5f7fb"/><rect x="264" y="85" width="2" height="1" fill="#a9afc0"/>
<rect x="263" y="87" width="2" height="1" fill="#f5f7fb"/><rect x="264" y="88" width="2" height="1" fill="#a9afc0"/>
<rect x="263" y="90" width="2" height="1" fill="#f5f7fb"/><rect x="264" y="91" width="2" height="1" fill="#a9afc0"/>
<rect x="263" y="93" width="2" height="1" fill="#f5f7fb"/><rect x="264" y="94" width="2" height="1" fill="#a9afc0"/>
<rect x="263" y="96" width="2" height="1" fill="#f5f7fb"/><rect x="264" y="97" width="2" height="1" fill="#a9afc0"/>
<rect x="263" y="99" width="2" height="1" fill="#f5f7fb"/><rect x="264" y="100" width="2" height="1" fill="#a9afc0"/>
<rect x="263" y="102" width="2" height="1" fill="#f5f7fb"/><rect x="264" y="103" width="2" height="1" fill="#a9afc0"/>
<rect x="263" y="105" width="2" height="1" fill="#f5f7fb"/><rect x="264" y="106" width="2" height="1" fill="#a9afc0"/>
<rect x="595" y="66" width="2" height="1" fill="#f5f7fb"/><rect x="596" y="67" width="2" height="1" fill="#a9afc0"/>
<rect x="595" y="69" width="2" height="1" fill="#f5f7fb"/><rect x="596" y="70" width="2" height="1" fill="#a9afc0"/>
<rect x="595" y="72" width="2" height="1" fill="#f5f7fb"/><rect x="596" y="73" width="2" height="1" fill="#a9afc0"/>
<rect x="595" y="75" width="2" height="1" fill="#f5f7fb"/><rect x="596" y="76" width="2" height="1" fill="#a9afc0"/>
<rect x="595" y="78" width="2" height="1" fill="#f5f7fb"/><rect x="596" y="79" width="2" height="1" fill="#a9afc0"/>
<rect x="595" y="81" width="2" height="1" fill="#f5f7fb"/><rect x="596" y="82" width="2" height="1" fill="#a9afc0"/>
<rect x="595" y="84" width="2" height="1" fill="#f5f7fb"/><rect x="596" y="85" width="2" height="1" fill="#a9afc0"/>
<rect x="595" y="87" width="2" height="1" fill="#f5f7fb"/><rect x="596" y="88" width="2" height="1" fill="#a9afc0"/>
<rect x="595" y="90" width="2" height="1" fill="#f5f7fb"/><rect x="596" y="91" width="2" height="1" fill="#a9afc0"/>
<rect x="595" y="93" width="2" height="1" fill="#f5f7fb"/><rect x="596" y="94" width="2" height="1" fill="#a9afc0"/>
<rect x="595" y="96" width="2" height="1" fill="#f5f7fb"/><rect x="596" y="97" width="2" height="1" fill="#a9afc0"/>
<rect x="595" y="99" width="2" height="1" fill="#f5f7fb"/><rect x="596" y="100" width="2" height="1" fill="#a9afc0"/>
<rect x="595" y="102" width="2" height="1" fill="#f5f7fb"/><rect x="596" y="103" width="2" height="1" fill="#a9afc0"/>
<rect x="595" y="105" width="2" height="1" fill="#f5f7fb"/><rect x="596" y="106" width="2" height="1" fill="#a9afc0"/>
<rect x="870" y="66" width="2" height="1" fill="#f5f7fb"/><rect x="871" y="67" width="2" height="1" fill="#a9afc0"/>
<rect x="870" y="69" width="2" height="1" fill="#f5f7fb"/><rect x="871" y="70" width="2" height="1" fill="#a9afc0"/>
<rect x="870" y="72" width="2" height="1" fill="#f5f7fb"/><rect x="871" y="73" width="2" height="1" fill="#a9afc0"/>
<rect x="870" y="75" width="2" height="1" fill="#f5f7fb"/><rect x="871" y="76" width="2" height="1" fill="#a9afc0"/>
<rect x="870" y="78" width="2" height="1" fill="#f5f7fb"/><rect x="871" y="79" width="2" height="1" fill="#a9afc0"/>
<rect x="870" y="81" width="2" height="1" fill="#f5f7fb"/><rect x="871" y="82" width="2" height="1" fill="#a9afc0"/>
<rect x="870" y="84" width="2" height="1" fill="#f5f7fb"/><rect x="871" y="85" width="2" height="1" fill="#a9afc0"/>
<rect x="870" y="87" width="2" height="1" fill="#f5f7fb"/><rect x="871" y="88" width="2" height="1" fill="#a9afc0"/>
<rect x="870" y="90" width="2" height="1" fill="#f5f7fb"/><rect x="871" y="91" width="2" height="1" fill="#a9afc0"/>
<rect x="870" y="93" width="2" height="1" fill="#f5f7fb"/><rect x="871" y="94" width="2" height="1" fill="#a9afc0"/>
<rect x="870" y="96" width="2" height="1" fill="#f5f7fb"/><rect x="871" y="97" width="2" height="1" fill="#a9afc0"/>
<rect x="870" y="99" width="2" height="1" fill="#f5f7fb"/><rect x="871" y="100" width="2" height="1" fill="#a9afc0"/>
<rect x="870" y="102" width="2" height="1" fill="#f5f7fb"/><rect x="871" y="103" width="2" height="1" fill="#a9afc0"/>
<rect x="870" y="105" width="2" height="1" fill="#f5f7fb"/><rect x="871" y="106" width="2" height="1" fill="#a9afc0"/>
<rect x="1042" y="66" width="2" height="1" fill="#f5f7fb"/><rect x="1043" y="67" width="2" height="1" fill="#a9afc0"/>
<rect x="1042" y="69" width="2" height="1" fill="#f5f7fb"/><rect x="1043" y="70" width="2" height="1" fill="#a9afc0"/>
<rect x="1042" y="72" width="2" height="1" fill="#f5f7fb"/><rect x="1043" y="73" width="2" height="1" fill="#a9afc0"/>
<rect x="1042" y="75" width="2" height="1" fill="#f5f7fb"/><rect x="1043" y="76" width="2" height="1" fill="#a9afc0"/>
<rect x="1042" y="78" width="2" height="1" fill="#f5f7fb"/><rect x="1043" y="79" width="2" height="1" fill="#a9afc0"/>
<rect x="1042" y="81" width="2" height="1" fill="#f5f7fb"/><rect x="1043" y="82" width="2" height="1" fill="#a9afc0"/>
<rect x="1042" y="84" width="2" height="1" fill="#f5f7fb"/><rect x="1043" y="85" width="2" height="1" fill="#a9afc0"/>
<rect x="1042" y="87" width="2" height="1" fill="#f5f7fb"/><rect x="1043" y="88" width="2" height="1" fill="#a9afc0"/>
<rect x="1042" y="90" width="2" height="1" fill="#f5f7fb"/><rect x="1043" y="91" width="2" height="1" fill="#a9afc0"/>
<rect x="1042" y="93" width="2" height="1" fill="#f5f7fb"/><rect x="1043" y="94" width="2" height="1" fill="#a9afc0"/>
<rect x="1042" y="96" width="2" height="1" fill="#f5f7fb"/><rect x="1043" y="97" width="2" height="1" fill="#a9afc0"/>
<rect x="1042" y="99" width="2" height="1" fill="#f5f7fb"/><rect x="1043" y="100" width="2" height="1" fill="#a9afc0"/>
<rect x="1042" y="102" width="2" height="1" fill="#f5f7fb"/><rect x="1043" y="103" width="2" height="1" fill="#a9afc0"/>
<rect x="1042" y="105" width="2" height="1" fill="#f5f7fb"/><rect x="1043" y="106" width="2" height="1" fill="#a9afc0"/>
<rect x="1136" y="66" width="2" height="1" fill="#f5f7fb"/><rect x="1137" y="67" width="2" height="1" fill="#a9afc0"/>
<rect x="1136" y="69" width="2" height="1" fill="#f5f7fb"/><rect x="1137" y="70" width="2" height="1" fill="#a9afc0"/>
<rect x="1136" y="72" width="2" height="1" fill="#f5f7fb"/><rect x="1137" y="73" width="2" height="1" fill="#a9afc0"/>
<rect x="1136" y="75" width="2" height="1" fill="#f5f7fb"/><rect x="1137" y="76" width="2" height="1" fill="#a9afc0"/>
<rect x="1136" y="78" width="2" height="1" fill="#f5f7fb"/><rect x="1137" y="79" width="2" height="1" fill="#a9afc0"/>
<rect x="1136" y="81" width="2" height="1" fill="#f5f7fb"/><rect x="1137" y="82" width="2" height="1" fill="#a9afc0"/>
<rect x="1136" y="84" width="2" height="1" fill="#f5f7fb"/><rect x="1137" y="85" width="2" height="1" fill="#a9afc0"/>
<rect x="1136" y="87" width="2" height="1" fill="#f5f7fb"/><rect x="1137" y="88" width="2" height="1" fill="#a9afc0"/>
<rect x="1136" y="90" width="2" height="1" fill="#f5f7fb"/><rect x="1137" y="91" width="2" height="1" fill="#a9afc0"/>
<rect x="1136" y="93" width="2" height="1" fill="#f5f7fb"/><rect x="1137" y="94" width="2" height="1" fill="#a9afc0"/>
<rect x="1136" y="96" width="2" height="1" fill="#f5f7fb"/><rect x="1137" y="97" width="2" height="1" fill="#a9afc0"/>
<rect x="1136" y="99" width="2" height="1" fill="#f5f7fb"/><rect x="1137" y="100" width="2" height="1" fill="#a9afc0"/>
<rect x="1136" y="102" width="2" height="1" fill="#f5f7fb"/><rect x="1137" y="103" width="2" height="1" fill="#a9afc0"/>
<rect x="1136" y="105" width="2" height="1" fill="#f5f7fb"/><rect x="1137" y="106" width="2" height="1" fill="#a9afc0"/>
<rect x="1" y="121" width="2" height="1" fill="#f5f7fb"/><rect x="2" y="122" width="2" height="1" fill="#a9afc0"/>
<rect x="4" y="121" width="2" height="1" fill="#f5f7fb"/><rect x="5" y="122" width="2" height="1" fill="#a9afc0"/>
<rect x="7" y="121" width="2" height="1" fill="#f5f7fb"/><rect x="8" y="122" width="2" height="1" fill="#a9afc0"/>
<rect x="10" y="121" width="2" height="1" fill="#f5f7fb"/><rect x="11" y="122" width="2" height="1" fill="#a9afc0"/>
<rect x="13" y="121" width="2" height="1" fill="#f5f7fb"/><rect x="14" y="122" width="2" height="1" fill="#a9afc0"/>
<rect x="16" y="121" width="2" height="1" fill="#f5f7fb"/><rect x="17" y="122" width="2" height="1" fill="#a9afc0"/>
<rect x="19" y="121" width="2" height="1" fill="#f5f7fb"/><rect x="20" y="122" width="2" height="1" fill="#a9afc0"/>
<rect x="22" y="121" width="2" height="1" fill="#f5f7fb"/><rect x="23" y="122" width="2" height="1" fill="#a9afc0"/>
<rect x="25" y="121" width="2" height="1" fill="#f5f7fb"/><rect x="26" y="122" width="2" height="1" fill="#a9afc0"/>
<rect x="28" y="121" width="2" height="1" fill="#f5f7fb"/><rect x="29" y="122" width="2" height="1" fill="#a9afc0"/>
<rect x="31" y="121" width="2" height="1" fill="#f5f7fb"/><rect x="32" y="122" width="2" height="1" fill="#a9afc0"/>
<rect x="34" y="121" width="2" height="1" fill="#f5f7fb"/><rect x="35" y="122" width="2" height="1" fill="#a9afc0"/>
<rect x="37" y="121" width="2" height="1" fill="#f5f7fb"/><rect x="38" y="122" width="2" height="1" fill="#a9afc0"/>
<rect x="40" y="121" width="2" height="1" fill="#f5f7fb"/><rect x="41" y="122" width="2" height="1" fill="#a9afc0"/>
<rect x="43" y="121" width="2" height="1" fill="#f5f7fb"/><rect x="44" y="122" width="2" height="1" fill="#a9afc0"/>
<rect x="46" y="121" width="2" height="1" fill="#f5f7fb"/><rect x="47" y="122" width="2" height="1" fill="#a9afc0"/>
<rect x="49" y="121" width="2" height="1" fill="#f5f7fb"/><rect x="50" y="122" width="2" height="1" fill="#a9afc0"/>
<rect x="52" y="121" width="2" height="1" fill="#f5f7fb"/><rect x="53" y="122" width="2" height="1" fill="#a9afc0"/>
<rect x="55" y="121" width="2" height="1" fill="#f5f7fb"/><rect x="56" y="122" width="2" height="1" fill="#a9afc0"/>
<rect x="1" y="374" width="2" height="1" fill="#f5f7fb"/><rect x="2" y="375" width="2" height="1" fill="#a9afc0"/>
<rect x="4" y="374" width="2" height="1" fill="#f5f7fb"/><rect x="5" y="375" width="2" height="1" fill="#a9afc0"/>
<rect x="7" y="374" width="2" height="1" fill="#f5f7fb"/><rect x="8" y="375" width="2" height="1" fill="#a9afc0"/>
<rect x="10" y="374" width="2" height="1" fill="#f5f7fb"/><rect x="11" y="375" width="2" height="1" fill="#a9afc0"/>
<rect x="13" y="374" width="2" height="1" fill="#f5f7fb"/><rect x="14" y="375" width="2" height="1" fill="#a9afc0"/>
<rect x="16" y="374" width="2" height="1" fill="#f5f7fb"/><rect x="17" y="375" width="2" height="1" fill="#a9afc0"/>
<rect x="19" y="374" width="2" height="1" fill="#f5f7fb"/><rect x="20" y="375" width="2" height="1" fill="#a9afc0"/>
<rect x="22" y="374" width="2" height="1" fill="#f5f7fb"/><rect x="23" y="375" width="2" height="1" fill="#a9afc0"/>
<rect x="25" y="374" width="2" height="1" fill="#f5f7fb"/><rect x="26" y="375" width="2" height="1" fill="#a9afc0"/>
<rect x="28" y="374" width="2" height="1" fill="#f5f7fb"/><rect x="29" y="375" width="2" height="1" fill="#a9afc0"/>
<rect x="31" y="374" width="2" height="1" fill="#f5f7fb"/><rect x="32" y="375" width="2" height="1" fill="#a9afc0"/>
<rect x="34" y="374" width="2" height="1" fill="#f5f7fb"/><rect x="35" y="375" width="2" height="1" fill="#a9afc0"/>
<rect x="37" y="374" width="2" height="1" fill="#f5f7fb"/><rect x="38" y="375" width="2" height="1" fill="#a9afc0"/>
<rect x="40" y="374" width="2" height="1" fill="#f5f7fb"/><rect x="41" y="375" width="2" height="1" fill="#a9afc0"/>
<rect x="43" y="374" width="2" height="1" fill="#f5f7fb"/><rect x="44" y="375" width="2" height="1" fill="#a9afc0"/>
<rect x="46" y="374" width="2" height="1" fill="#f5f7fb"/><rect x="47" y="375" width="2" height="1" fill="#a9afc0"/>
<rect x="49" y="374" width="2" height="1" fill="#f5f7fb"/><rect x="50" y="375" width="2" height="1" fill="#a9afc0"/>
<rect x="52" y="374" width="2" height="1" fill="#f5f7fb"/><rect x="53" y="375" width="2" height="1" fill="#a9afc0"/>
<rect x="55" y="374" width="2" height="1" fill="#f5f7fb"/><rect x="56" y="375" width="2" height="1" fill="#a9afc0"/>
<rect x="0" y="1000" width="1920" height="40" fill="#d6dbe9" />
<rect x="1" y="1019.5" width="1919" height="1.5" fill="#a6a8ad" />
<rect x="0" y="1040" width="1920" height="8" fill="#3b3229" />
<rect x="394" y="1040" width="44" height="8" fill="#6b6558" />
<rect x="1341" y="1003" width="131" height="16" fill="#fff" />
<circle cx="1466.5" cy="1009.5" r="3.3" fill="none" stroke="#3f68b0" stroke-width="1.2"/><path d="M1464 1012l-3.5 4" stroke="#3f68b0" stroke-width="1.6"/>
<rect x="1336" y="1004" width="1" height="1" fill="#9aa0b2"/><rect x="1338" y="1005" width="1" height="1" fill="#9aa0b2"/>
<rect x="1336" y="1006" width="1" height="1" fill="#9aa0b2"/><rect x="1338" y="1007" width="1" height="1" fill="#9aa0b2"/>
<rect x="1336" y="1008" width="1" height="1" fill="#9aa0b2"/><rect x="1338" y="1009" width="1" height="1" fill="#9aa0b2"/>
<rect x="1336" y="1010" width="1" height="1" fill="#9aa0b2"/><rect x="1338" y="1011" width="1" height="1" fill="#9aa0b2"/>
<rect x="1336" y="1012" width="1" height="1" fill="#9aa0b2"/><rect x="1338" y="1013" width="1" height="1" fill="#9aa0b2"/>
<rect x="1336" y="1014" width="1" height="1" fill="#9aa0b2"/><rect x="1338" y="1015" width="1" height="1" fill="#9aa0b2"/>
<rect x="1336" y="1016" width="1" height="1" fill="#9aa0b2"/><rect x="1338" y="1017" width="1" height="1" fill="#9aa0b2"/>
<rect x="1336" y="1018" width="1" height="1" fill="#9aa0b2"/><rect x="1338" y="1019" width="1" height="1" fill="#9aa0b2"/>
<rect x="1476" y="1004" width="1" height="1" fill="#9aa0b2"/><rect x="1478" y="1005" width="1" height="1" fill="#9aa0b2"/>
<rect x="1476" y="1006" width="1" height="1" fill="#9aa0b2"/><rect x="1478" y="1007" width="1" height="1" fill="#9aa0b2"/>
<rect x="1476" y="1008" width="1" height="1" fill="#9aa0b2"/><rect x="1478" y="1009" width="1" height="1" fill="#9aa0b2"/>
<rect x="1476" y="1010" width="1" height="1" fill="#9aa0b2"/><rect x="1478" y="1011" width="1" height="1" fill="#9aa0b2"/>
<rect x="1476" y="1012" width="1" height="1" fill="#9aa0b2"/><rect x="1478" y="1013" width="1" height="1" fill="#9aa0b2"/>
<rect x="1476" y="1014" width="1" height="1" fill="#9aa0b2"/><rect x="1478" y="1015" width="1" height="1" fill="#9aa0b2"/>
<rect x="1476" y="1016" width="1" height="1" fill="#9aa0b2"/><rect x="1478" y="1017" width="1" height="1" fill="#9aa0b2"/>
<rect x="1476" y="1018" width="1" height="1" fill="#9aa0b2"/><rect x="1478" y="1019" width="1" height="1" fill="#9aa0b2"/>
<rect x="1658" y="1004" width="1" height="1" fill="#9aa0b2"/><rect x="1660" y="1005" width="1" height="1" fill="#9aa0b2"/>
<rect x="1658" y="1006" width="1" height="1" fill="#9aa0b2"/><rect x="1660" y="1007" width="1" height="1" fill="#9aa0b2"/>
<rect x="1658" y="1008" width="1" height="1" fill="#9aa0b2"/><rect x="1660" y="1009" width="1" height="1" fill="#9aa0b2"/>
<rect x="1658" y="1010" width="1" height="1" fill="#9aa0b2"/><rect x="1660" y="1011" width="1" height="1" fill="#9aa0b2"/>
<rect x="1658" y="1012" width="1" height="1" fill="#9aa0b2"/><rect x="1660" y="1013" width="1" height="1" fill="#9aa0b2"/>
<rect x="1658" y="1014" width="1" height="1" fill="#9aa0b2"/><rect x="1660" y="1015" width="1" height="1" fill="#9aa0b2"/>
<rect x="1658" y="1016" width="1" height="1" fill="#9aa0b2"/><rect x="1660" y="1017" width="1" height="1" fill="#9aa0b2"/>
<rect x="1658" y="1018" width="1" height="1" fill="#9aa0b2"/><rect x="1660" y="1019" width="1" height="1" fill="#9aa0b2"/>
<rect x="1592" y="1003" width="1.5" height="16" fill="#b4b8c6" />
<rect x="1726" y="1003" width="1.5" height="16" fill="#b4b8c6" />
<rect x="1757" y="1003" width="1.5" height="16" fill="#b4b8c6" />
<rect x="1800" y="1003" width="1.5" height="16" fill="#b4b8c6" />
<rect x="1843" y="1003" width="1.5" height="16" fill="#b4b8c6" />
<rect x="1886" y="1003" width="1.5" height="16" fill="#b4b8c6" />
<rect x="1762" y="1005" width="32" height="12" fill="#44608a" />
<rect x="1805" y="1005" width="32" height="12" fill="#44608a" />
<rect x="1848" y="1005" width="32" height="12" fill="#44608a" />
<rect x="1132" y="1023" width="1.5" height="16" fill="#b4b8c6" />
<rect x="1175" y="1023" width="1.5" height="16" fill="#b4b8c6" />
<rect x="1206" y="1023" width="1.5" height="16" fill="#b4b8c6" />
<rect x="1237" y="1023" width="1.5" height="16" fill="#b4b8c6" />
<rect x="1268" y="1023" width="1.5" height="16" fill="#b4b8c6" />
<rect x="1299" y="1023" width="1.5" height="16" fill="#b4b8c6" />
<rect x="1330" y="1023" width="1.5" height="16" fill="#b4b8c6" />
<rect x="1361" y="1023" width="1.5" height="16" fill="#b4b8c6" />
<rect x="1392" y="1023" width="1.5" height="16" fill="#b4b8c6" />
<rect x="1423" y="1023" width="1.5" height="16" fill="#b4b8c6" />
<rect x="1454" y="1023" width="1.5" height="16" fill="#b4b8c6" />
<rect x="1580" y="1023" width="1.5" height="16" fill="#b4b8c6" />
<rect x="1654" y="1023" width="1.5" height="16" fill="#b4b8c6" />
<defs>
<linearGradient id="cb" x1="0" y1="0" x2="1" y2="0"><stop offset="0" stop-color="#2a4fa0"/><stop offset="0.45" stop-color="#9dc0f0"/><stop offset="1" stop-color="#2446a0"/></linearGradient>
<linearGradient id="cl" x1="0" y1="0" x2="1" y2="0"><stop offset="0" stop-color="#a9b8da"/><stop offset="0.5" stop-color="#e6ecf8"/><stop offset="1" stop-color="#a3b2d6"/></linearGradient>
<linearGradient id="gg" x1="0" y1="0" x2="1" y2="1"><stop offset="0" stop-color="#7ce860"/><stop offset="1" stop-color="#1e9a18"/></linearGradient>
<linearGradient id="pg" x1="0" y1="0" x2="1" y2="1"><stop offset="0" stop-color="#ffffff"/><stop offset="1" stop-color="#b9cdf2"/></linearGradient>
<linearGradient id="fl" x1="0" y1="0" x2="0" y2="1"><stop offset="0" stop-color="#5a7fd0"/><stop offset="1" stop-color="#2c4aa0"/></linearGradient>
<radialGradient id="gry" cx="0.35" cy="0.3" r="0.8"><stop offset="0" stop-color="#e0e0e0"/><stop offset="1" stop-color="#6e6e6e"/></radialGradient>
</defs>
<g transform="translate(2 3)"><rect width="16" height="16" rx="1.500" fill="#6cb33e"/><rect x="0.500" y="0.500" width="15" height="15" rx="1" fill="none" stroke="#9ad070" stroke-width="0.800"/><text x="3.200" y="13.500" font-size="14" font-weight="bold" fill="#fff">V</text></g>
<rect x="21" y="4" width="1" height="14" fill="#b8b8b8" />
<g transform="translate(33 4)"><path d="M0.500,0.500 h8.500 l4,4 v11 h-12.500z" fill="url(#pg)" stroke="#222" stroke-width="1"/><path d="M9,0.500 v4 h4" fill="#fff" stroke="#222" stroke-width="0.800"/></g>
<g transform="translate(55 4)"><path d="M1,5 l2,-2 h5 l1.500,2 h6 v10 h-14.500z" fill="#e8c050" stroke="#a88420" stroke-width="0.700"/><path d="M0,15 l3,-8 h14 l-3,8z" fill="#f6dc84" stroke="#a88420" stroke-width="0.700"/><path d="M7,5 q3,-6 9,-3 l1,-2 l1.500,6 l-6,-0.500 l1.500,-1.500 q-4,-2 -7,1z" fill="#3cb828" stroke="#1c7c14" stroke-width="0.500"/></g>
<g transform="translate(79 3)"><path d="M1,2 h7 l2,2 v5 h-9z M1,9.500 h7 l2,2 v5 h-9z" fill="#f0d478" stroke="#b89830" stroke-width="0.700"/><path d="M9,4 h5.500 l3.500,3.500 v8.500 h-9z" fill="url(#pg)" stroke="#555" stroke-width="0.800"/><path d="M4,1 h8 v2" fill="none" stroke="#58c848" stroke-width="0.800"/></g>
<g transform="translate(103 4)"><rect x="0" y="0" width="17" height="16" rx="1" fill="url(#fl)" stroke="#1c3478" stroke-width="0.800"/><rect x="2.500" y="1" width="12" height="7.2" fill="#f4f4f4"/><path d="M3.500,3 h10 M3.500,5 h10" stroke="#d04040" stroke-width="0.800"/><rect x="4" y="9.92" width="9" height="6.08" fill="#cfd6e8"/><rect x="5" y="10.88" width="2.500" height="4.48" fill="#24386c"/></g>
<g transform="translate(132 3)"><rect x="0" y="0" width="13" height="11" rx="1" fill="url(#fl)" stroke="#1c3478" stroke-width="0.800"/><rect x="2.500" y="1" width="8" height="4.95" fill="#f4f4f4"/><path d="M3.500,3 h6 M3.500,5 h6" stroke="#d04040" stroke-width="0.800"/><rect x="4" y="6.82" width="5" height="4.18" fill="#cfd6e8"/><rect x="5" y="7.48" width="2.500" height="3.08" fill="#24386c"/></g>
<g transform="translate(127 9)"><rect x="0" y="0" width="13" height="11" rx="1" fill="url(#fl)" stroke="#1c3478" stroke-width="0.800"/><rect x="2.500" y="1" width="8" height="4.95" fill="#f4f4f4"/><path d="M3.500,3 h6 M3.500,5 h6" stroke="#d04040" stroke-width="0.800"/><rect x="4" y="6.82" width="5" height="4.18" fill="#cfd6e8"/><rect x="5" y="7.48" width="2.500" height="3.08" fill="#24386c"/></g>
<g transform="translate(150 2)"><rect x="0" y="0" width="13" height="11" rx="1" fill="url(#fl)" stroke="#1c3478" stroke-width="0.800"/><rect x="2.500" y="1" width="8" height="4.95" fill="#f4f4f4"/><path d="M3.500,3 h6 M3.500,5 h6" stroke="#d04040" stroke-width="0.800"/><rect x="4" y="6.82" width="5" height="4.18" fill="#cfd6e8"/><rect x="5" y="7.48" width="2.500" height="3.08" fill="#24386c"/><path d="M15,2 q4,0 4,4 l1.500,-0.500 l-2,3.500 l-3,-2.500 l1.500,-0.300 q0,-2 -2,-2.200z" fill="#38b828"/><g transform="translate(9 9) scale(1.1)"><path d="M0,3 l5,-2 l5,2 v6 l-5,2.500 l-5,-2.500z" fill="#6a6a6a" stroke="#333" stroke-width="0.500"/><path d="M0,3 l5,2 v6.500 l-5,-2.500z" fill="#9a9a9a"/><path d="M0,3 l5,-2 l5,2 l-5,2z" fill="#b8b8b8"/></g></g>
<g transform="translate(175 3)"><rect x="5" y="0" width="10" height="9" fill="#eef4ff" stroke="#5a6a8a" stroke-width="0.700"/><path d="M10,1.500 l3,3 h-2 v3 h-2 v-3 h-2z" fill="#28b038"/><path d="M1,8 h17 l1,2 v6 h-19 v-6z" fill="#e4e4e4" stroke="#555" stroke-width="0.800"/><rect x="0" y="13" width="19" height="3.500" fill="#9a9a9a"/><rect x="3" y="10" width="13" height="2" fill="#fff"/></g>
<g transform="translate(197 2)"><circle cx="10" cy="10" r="9.500" fill="#6a9a3a"/><circle cx="10" cy="10" r="8" fill="#88b850"/><circle cx="9.500" cy="9.500" r="5.500" fill="#cfe2f8" stroke="#8a93a8" stroke-width="1.400"/><path d="M13.500,13.500 l4.500,4.500" stroke="#c8ccd4" stroke-width="2.600" stroke-linecap="round"/><path d="M9.500,6 v4 l2,1" stroke="#7a90b8" stroke-width="0.800" fill="none"/></g>
<g transform="translate(225 4)"><path d="M0,7 l7,-6 v3.500 q8,0 8,7 q0,3 -2,4.500 q0.500,-6 -6,-6 v3.500z" fill="#8e8e8e" stroke="#6a6a6a" stroke-width="0.500"/></g>
<g transform="translate(247 4)"><path d="M16,7 l-7,-6 v3.500 q-8,0 -8,7 q0,3 2,4.500 q-0.500,-6 6,-6 v3.500z" fill="#8e8e8e" stroke="#6a6a6a" stroke-width="0.500"/></g>
<g transform="translate(270 3)"><path d="M2,8 l7,-6 v3.500 q9,0 9,7.500 q0,3 -2,4.500 q0.500,-6.500 -7,-6.500 v3.500z" fill="#5a8ad8" stroke="#3a62b0" stroke-width="0.500"/><path d="M1,9.500 h6 l-2,4 l2,4 h-6 l2,-4z" fill="#b8923a" stroke="#6a5018" stroke-width="0.500"/></g>
<path d="M295.500,10.500h7" stroke="#000"/><path d="M296,13 h6 l-3,3z" fill="#000"/>
<rect x="311" y="4" width="1" height="14" fill="#c4c4c4" />
<g transform="translate(24 69)"><path d="M0,2.500 l4,-2 h7 l-3,2z M0,5.500 l4,-2 h7 l-3,2z M0,8.500 l4,-2 h7 l-3,2z" fill="#aab6ea" stroke="#5060b0" stroke-width="0.500"/><ellipse cx="10" cy="13" rx="7.500" ry="4.500" fill="#b89068" stroke="#6a4a2a" stroke-width="0.500"/><circle cx="7" cy="14" r="1.600" fill="#2040e0"/><circle cx="11" cy="15" r="1.600" fill="#d01818"/><circle cx="13.500" cy="12.500" r="1.500" fill="#18a828"/><path d="M9,12 l8,-11" stroke="#b86820" stroke-width="1.600"/></g>
<g transform="translate(48 69)"><path d="M8,0 h6 l3,3 v10 h-9z" fill="#c8d8f4" stroke="#222" stroke-width="1"/><path d="M3,4 h6 l3,3 v9 h-9z" fill="#88a8e0" stroke="#222" stroke-width="1"/><g transform="translate(1 9) scale(0.950)"><path d="M0,7 Q4,0.500 10,0.500 Q15,0.800 18,5.500" fill="none" stroke="#2d3148" stroke-width="1.800"/><path d="M0.500,7.500 Q5,2 10,2 Q15,2.500 17.500,6 Q13,9.500 8,9 Q3,9 0.500,7.500Z" fill="#c2c6dc"/><circle cx="9.500" cy="5.300" r="3.600" fill="#4a5b86"/><circle cx="9.500" cy="5.300" r="1.600" fill="#1c2440"/><circle cx="8.300" cy="4.200" r="0.900" fill="#dfe6f8"/><path d="M11,0.300 l1,-1.300 M13.500,0.800 l1.300,-1.300 M15.800,2 l1.500,-1.200 M8,0.300 l0,-1.200" stroke="#2d3148" stroke-width="0.700"/></g></g>
<g transform="translate(74 68)"><path d="M0,7 Q4,0.500 10,0.500 Q15,0.800 18,5.500" fill="none" stroke="#2d3148" stroke-width="1.800"/><path d="M0.500,7.500 Q5,2 10,2 Q15,2.500 17.500,6 Q13,9.500 8,9 Q3,9 0.500,7.500Z" fill="#c2c6dc"/><circle cx="9.500" cy="5.300" r="3.600" fill="#4a5b86"/><circle cx="9.500" cy="5.300" r="1.600" fill="#1c2440"/><circle cx="8.300" cy="4.200" r="0.900" fill="#dfe6f8"/><path d="M11,0.300 l1,-1.300 M13.500,0.800 l1.300,-1.300 M15.800,2 l1.500,-1.200 M8,0.300 l0,-1.200" stroke="#2d3148" stroke-width="0.700"/><path d="M1.2000000000000002,13h7.6M5,9.2v7.6" stroke="#6fdc3c" stroke-width="2.4"/><path d="M10,16 l5,-5 M13.5,9.5 q5,-2 5,3 q0,3.500 -4,3.500" fill="none" stroke="#3c7ad8" stroke-width="1.600"/></g>
<g transform="translate(100 68)"><path d="M0,7 Q4,0.500 10,0.500 Q15,0.800 18,5.500" fill="none" stroke="#2d3148" stroke-width="1.800"/><path d="M0.500,7.500 Q5,2 10,2 Q15,2.500 17.500,6 Q13,9.500 8,9 Q3,9 0.500,7.500Z" fill="#c2c6dc"/><circle cx="9.500" cy="5.300" r="3.600" fill="#4a5b86"/><circle cx="9.500" cy="5.300" r="1.600" fill="#1c2440"/><circle cx="8.300" cy="4.200" r="0.900" fill="#dfe6f8"/><path d="M11,0.300 l1,-1.300 M13.500,0.800 l1.300,-1.300 M15.800,2 l1.500,-1.200 M8,0.300 l0,-1.200" stroke="#2d3148" stroke-width="0.700"/><path d="M1.2000000000000002,14h7.6" stroke="#e8dc10" stroke-width="2.4"/><path d="M10,16 l5,-5 M13.5,9.5 q5,-2 5,3 q0,3.500 -4,3.500" fill="none" stroke="#3c7ad8" stroke-width="1.600"/></g>
<g transform="translate(127 67)"><g transform="translate(0 0)"><path d="M0,7 Q4,0.500 10,0.500 Q15,0.800 18,5.500" fill="none" stroke="#2d3148" stroke-width="1.800"/><path d="M0.500,7.500 Q5,2 10,2 Q15,2.500 17.500,6 Q13,9.500 8,9 Q3,9 0.500,7.500Z" fill="#c2c6dc"/><circle cx="9.500" cy="5.300" r="3.600" fill="#4a5b86"/><circle cx="9.500" cy="5.300" r="1.600" fill="#1c2440"/><circle cx="8.300" cy="4.200" r="0.900" fill="#dfe6f8"/><path d="M11,0.300 l1,-1.300 M13.500,0.800 l1.300,-1.300 M15.800,2 l1.500,-1.200 M8,0.300 l0,-1.200" stroke="#2d3148" stroke-width="0.700"/></g><g transform="translate(0 6)"><rect x="0" y="0" width="7" height="14" rx="2.500" fill="#111"/><circle cx="3.500" cy="3.700" r="2.400" fill="#f4c400"/><circle cx="3.500" cy="10.300" r="2.400" fill="#18d018"/><rect x="11" y="0" width="7" height="14" rx="2.500" fill="#111"/><circle cx="14.500" cy="3.700" r="2.400" fill="#e81010"/><circle cx="14.500" cy="10.300" r="2.400" fill="#f4c400"/></g></g>
<g transform="translate(153 67)"><path d="M0,7 Q4,0.500 10,0.500 Q15,0.800 18,5.500" fill="none" stroke="#2d3148" stroke-width="1.800"/><path d="M0.500,7.500 Q5,2 10,2 Q15,2.500 17.500,6 Q13,9.500 8,9 Q3,9 0.500,7.500Z" fill="#c2c6dc"/><circle cx="9.500" cy="5.300" r="3.600" fill="#4a5b86"/><circle cx="9.500" cy="5.300" r="1.600" fill="#1c2440"/><circle cx="8.300" cy="4.200" r="0.900" fill="#dfe6f8"/><path d="M11,0.300 l1,-1.300 M13.500,0.800 l1.300,-1.300 M15.800,2 l1.500,-1.200 M8,0.300 l0,-1.200" stroke="#2d3148" stroke-width="0.700"/><g transform="translate(9 13.500)"><path d="M-6.5,1 A6.5,5.2 0 0 1 5.5,-3" fill="none" stroke="#4fc22c" stroke-width="3"/><path d="M9.0,-5.500 l-1,6 l-5.500,-3z" fill="#4fc22c"/><path d="M6.5,1.500 A6.5,5.2 0 0 1 -5.5,5" fill="none" stroke="#e8d018" stroke-width="3"/><path d="M-9.0,7.500 l1,-6 l5.500,3z" fill="#e8d018"/></g></g>
<g transform="translate(178 68)"><path d="M0,7 Q4,0.500 10,0.500 Q15,0.800 18,5.500" fill="none" stroke="#2d3148" stroke-width="1.800"/><path d="M0.500,7.500 Q5,2 10,2 Q15,2.500 17.500,6 Q13,9.500 8,9 Q3,9 0.500,7.500Z" fill="#c2c6dc"/><circle cx="9.500" cy="5.300" r="3.600" fill="#4a5b86"/><circle cx="9.500" cy="5.300" r="1.600" fill="#1c2440"/><circle cx="8.300" cy="4.200" r="0.900" fill="#dfe6f8"/><path d="M11,0.300 l1,-1.300 M13.500,0.800 l1.300,-1.300 M15.800,2 l1.500,-1.200 M8,0.300 l0,-1.200" stroke="#2d3148" stroke-width="0.700"/><path d="M1.0,11h7.0M4.5,7.5v7.0" stroke="#6fdc3c" stroke-width="2.4"/><path d="M7,18 l6,-9" stroke="#111" stroke-width="1.200"/><path d="M11.2,16.5h7.6" stroke="#e8dc10" stroke-width="2.4"/></g>
<g transform="translate(204 68)"><path d="M0,7 Q4,0.500 10,0.500 Q15,0.800 18,5.500" fill="none" stroke="#2d3148" stroke-width="1.800"/><path d="M0.500,7.500 Q5,2 10,2 Q15,2.500 17.500,6 Q13,9.500 8,9 Q3,9 0.500,7.500Z" fill="#c2c6dc"/><circle cx="9.500" cy="5.300" r="3.600" fill="#4a5b86"/><circle cx="9.500" cy="5.300" r="1.600" fill="#1c2440"/><circle cx="8.300" cy="4.200" r="0.900" fill="#dfe6f8"/><path d="M11,0.300 l1,-1.300 M13.500,0.800 l1.300,-1.300 M15.800,2 l1.500,-1.200 M8,0.300 l0,-1.200" stroke="#2d3148" stroke-width="0.700"/><path d="M6.5,13.5h9.0M11,9.0v9.0" stroke="#6fdc3c" stroke-width="2.8"/></g>
<g transform="translate(230 68)"><path d="M0,7 Q4,0.500 10,0.500 Q15,0.800 18,5.500" fill="none" stroke="#2d3148" stroke-width="1.800"/><path d="M0.500,7.500 Q5,2 10,2 Q15,2.500 17.500,6 Q13,9.500 8,9 Q3,9 0.500,7.500Z" fill="#c2c6dc"/><circle cx="9.500" cy="5.300" r="3.600" fill="#4a5b86"/><circle cx="9.500" cy="5.300" r="1.600" fill="#1c2440"/><circle cx="8.300" cy="4.200" r="0.900" fill="#dfe6f8"/><path d="M11,0.300 l1,-1.300 M13.500,0.800 l1.300,-1.300 M15.800,2 l1.500,-1.200 M8,0.300 l0,-1.200" stroke="#2d3148" stroke-width="0.700"/><path d="M7,12h10" stroke="#e8dc10" stroke-width="2.8"/></g>
<g transform="translate(283 79)"><path d="M-7,0 a7,7 0 0 1 12,-5 l2,-2 v6.500 h-6.500 l2,-2 a4,4 0 0 0 -6.500,2.500z" fill="#6a9be0" stroke="#3a6ab8" stroke-width="0.500"/><path d="M7,0 a7,7 0 0 1 -12,5 l-2,2 v-6.500 h6.500 l-2,2 a4,4 0 0 0 6.500,-2.500z" fill="#8ab4ec" stroke="#3a6ab8" stroke-width="0.500"/></g>
<g transform="translate(305 70)"><path d="M0,2.2 V14.8 A5.5,2.2 0 0 0 11,14.8 V2.2" fill="none" stroke="#222" stroke-width="1"/><ellipse cx="5.5" cy="2.2" rx="5.5" ry="2.2" fill="none" stroke="#222" stroke-width="1"/><path d="M0,14.800 A5.500,2.200 0 0 1 11,14.800" fill="none" stroke="#222" stroke-width="0.800"/></g>
<g transform="translate(331 70)"><path d="M0,2.2 V14.8 A5.5,2.2 0 0 0 11,14.8 V2.2" fill="none" stroke="#222" stroke-width="1"/><ellipse cx="5.5" cy="2.2" rx="5.5" ry="2.2" fill="none" stroke="#222" stroke-width="1"/></g>
<g transform="translate(357 70)"><path d="M0,2.2 V14.8 A5.5,2.2 0 0 0 11,14.8 V2.2" fill="none" stroke="#222" stroke-width="1"/><ellipse cx="5.5" cy="2.2" rx="5.5" ry="2.2" fill="none" stroke="#222" stroke-width="1"/><path d="M0,14.800 A5.500,2.200 0 0 1 11,14.800" fill="none" stroke="#666" stroke-width="0.700" stroke-dasharray="1.500 1"/></g>
<g transform="translate(383 70)"><path d="M0,2.2 V14.8 A5.5,2.2 0 0 0 11,14.8 V2.2" fill="url(#cb)" stroke="#20d8f0" stroke-width="1.2"/><ellipse cx="5.5" cy="2.2" rx="5.5" ry="2.2" fill="#6a9ae0" stroke="#20d8f0" stroke-width="1.2"/></g>
<rect x="401.500" y="66.500" width="24" height="23" fill="#ffe680" stroke="#e5c365"/>
<g transform="translate(409 70)"><ellipse cx="7" cy="16" rx="6" ry="1.600" fill="#5a5030" opacity="0.500"/><path d="M0,2.2 V14.8 A5.5,2.2 0 0 0 11,14.8 V2.2" fill="url(#cb)" stroke="#101840" stroke-width="0.8"/><ellipse cx="5.5" cy="2.2" rx="5.5" ry="2.2" fill="#6a9ae0" stroke="#101840" stroke-width="0.8"/></g>
<g transform="translate(435 70)"><path d="M0,2.2 V14.8 A5.5,2.2 0 0 0 11,14.8 V2.2" fill="url(#cl)" stroke="#40e0f0" stroke-width="1.1"/><ellipse cx="5.5" cy="2.2" rx="5.5" ry="2.2" fill="#e0e8f8" stroke="#40e0f0" stroke-width="1.1"/></g>
<g transform="translate(461 70)"><ellipse cx="7" cy="16" rx="6" ry="1.400" fill="#555" opacity="0.400"/><path d="M0,2.2 V14.8 A5.5,2.2 0 0 0 11,14.8 V2.2" fill="url(#cl)" stroke="#4a5a7a" stroke-width="0.8"/><ellipse cx="5.5" cy="2.2" rx="5.5" ry="2.2" fill="#dce4f4" stroke="#4a5a7a" stroke-width="0.8"/></g>
<g transform="translate(487 70)"><path d="M0,2.2 V14.8 A5.5,2.2 0 0 0 11,14.8 V2.2" fill="none" stroke="#222" stroke-width="1"/><ellipse cx="5.5" cy="2.2" rx="5.5" ry="2.2" fill="none" stroke="#222" stroke-width="1"/><path d="M2,3 l2,12 M4,3 l4,13 M7,4 l-3,12 M9,3 l-1,13 M6,3 l3,9" fill="none" stroke="#333" stroke-width="0.600"/></g>
<g transform="translate(508 67)"><path d="M0,2.2 V10.8 A4.5,2.2 0 0 0 9,10.8 V2.2" fill="#f0f0f0" stroke="#444" stroke-width="0.7"/><ellipse cx="4.5" cy="2.2" rx="4.5" ry="2.2" fill="#f0f0f0" stroke="#444" stroke-width="0.7"/><g transform="translate(10 6)"><path d="M0,2.2 V11.8 A5.0,2.2 0 0 0 10,11.8 V2.2" fill="url(#cb)" stroke="#102060" stroke-width="0.7"/><ellipse cx="5.0" cy="2.2" rx="5.0" ry="2.2" fill="#6a9ae0" stroke="#102060" stroke-width="0.7"/></g><path d="M10,1 q4,-2 7,1 l1,-1.500 v4.500 h-4.500 l1.500,-1.500 q-2,-2 -5,-1.500z M9,20 q-4,2 -7,-1 l-1,1.500 v-4.500 h4.500 l-1.500,1.500 q2,2 5,1.500z" fill="#38b828"/></g>
<g transform="translate(535 68)"><path d="M0,2.2 V12.8 A5.5,2.2 0 0 0 11,12.8 V2.2" fill="url(#cb)" stroke="#102060" stroke-width="0.7"/><ellipse cx="5.5" cy="2.2" rx="5.5" ry="2.2" fill="#6a9ae0" stroke="#102060" stroke-width="0.7"/><g transform="translate(13 13) scale(0.800)"><path d="M-7,0 a7,7 0 0 1 12,-5 l2,-2 v6.500 h-6.500 l2,-2 a4,4 0 0 0 -6.500,2.500z" fill="#6a9be0" stroke="#3a6ab8" stroke-width="0.500"/><path d="M7,0 a7,7 0 0 1 -12,5 l-2,2 v-6.500 h6.500 l-2,2 a4,4 0 0 0 6.500,-2.500z" fill="#8ab4ec" stroke="#3a6ab8" stroke-width="0.500"/></g></g>
<g transform="translate(561 69)"><rect x="0" y="1" width="16" height="12" fill="#3a5a98" stroke="#666e80" stroke-width="1.200"/><rect x="5" y="13" width="6" height="3" fill="#8a8f9c"/><path d="M3,17 l11,-13 M5,4 l11,13" stroke="#b8bcc8" stroke-width="2.200"/><path d="M3,17 l5,-6" stroke="#3c7ad8" stroke-width="2.400"/></g>
<g transform="translate(603 69)"><path d="M0,3 l6,-3 l6,2 l0,7 l-6,3 l-6,-2z" fill="#8c8c8c" stroke="#333" stroke-width="0.600"/><path d="M0,3 l6,2 l6,-3 M6,5 v7" fill="none" stroke="#333" stroke-width="0.600"/><path d="M0,3 l6,2 v7 l-6,-2z" fill="#c8c8c8" stroke="#333" stroke-width="0.500"/><path d="M9,3 l5,-2.500 l5,2 v6 l-5,3 l-5,-2z" fill="#f2f2f2" stroke="#333" stroke-width="0.600"/><path d="M9,3 l5,2 l5,-2.500 M14,5 v6.500" fill="none" stroke="#333" stroke-width="0.600"/><path d="M1.5,15h7.0M5,11.5v7.0" stroke="#6fdc3c" stroke-width="2.4"/><path d="M11,18 l5,-5 M14.5,11.5 q5,-2 5,3 q0,3.500 -4,3.500" fill="none" stroke="#3c7ad8" stroke-width="1.600"/></g>
<g transform="translate(629 69)"><path d="M0,3 l6,-3 l6,2 l0,7 l-6,3 l-6,-2z" fill="#8c8c8c" stroke="#333" stroke-width="0.600"/><path d="M0,3 l6,2 l6,-3 M6,5 v7" fill="none" stroke="#333" stroke-width="0.600"/><path d="M0,3 l6,2 v7 l-6,-2z" fill="#c8c8c8" stroke="#333" stroke-width="0.500"/><path d="M9,3 l5,-2.500 l5,2 v6 l-5,3 l-5,-2z" fill="#f2f2f2" stroke="#333" stroke-width="0.600"/><path d="M9,3 l5,2 l5,-2.500 M14,5 v6.500" fill="none" stroke="#333" stroke-width="0.600"/><g transform="translate(1 6)"><rect x="0" y="0" width="7" height="14" rx="2.500" fill="#111"/><circle cx="3.500" cy="3.700" r="2.400" fill="#f4c400"/><circle cx="3.500" cy="10.300" r="2.400" fill="#18d018"/><rect x="11" y="0" width="7" height="14" rx="2.500" fill="#111"/><circle cx="14.500" cy="3.700" r="2.400" fill="#e81010"/><circle cx="14.500" cy="10.300" r="2.400" fill="#f4c400"/></g></g>
<g transform="translate(655 69)"><path d="M0,3 l6,-3 l6,2 l0,7 l-6,3 l-6,-2z" fill="#8c8c8c" stroke="#333" stroke-width="0.600"/><path d="M0,3 l6,2 l6,-3 M6,5 v7" fill="none" stroke="#333" stroke-width="0.600"/><path d="M0,3 l6,2 v7 l-6,-2z" fill="#c8c8c8" stroke="#333" stroke-width="0.500"/><path d="M9,3 l5,-2.500 l5,2 v6 l-5,3 l-5,-2z" fill="#f2f2f2" stroke="#333" stroke-width="0.600"/><path d="M9,3 l5,2 l5,-2.500 M14,5 v6.500" fill="none" stroke="#333" stroke-width="0.600"/><g transform="translate(9.500 14)"><path d="M-6.5,1 A6.5,5.2 0 0 1 5.5,-3" fill="none" stroke="#4fc22c" stroke-width="3"/><path d="M9.0,-5.500 l-1,6 l-5.500,-3z" fill="#4fc22c"/><path d="M6.5,1.500 A6.5,5.2 0 0 1 -5.5,5" fill="none" stroke="#e8d018" stroke-width="3"/><path d="M-9.0,7.500 l1,-6 l5.500,3z" fill="#e8d018"/></g></g>
<g transform="translate(681 69)"><path d="M0,3 l6,-3 l6,2 l0,7 l-6,3 l-6,-2z" fill="#8c8c8c" stroke="#333" stroke-width="0.600"/><path d="M0,3 l6,2 l6,-3 M6,5 v7" fill="none" stroke="#333" stroke-width="0.600"/><path d="M0,3 l6,2 v7 l-6,-2z" fill="#c8c8c8" stroke="#333" stroke-width="0.500"/><path d="M9,3 l5,-2.500 l5,2 v6 l-5,3 l-5,-2z" fill="#f2f2f2" stroke="#333" stroke-width="0.600"/><path d="M9,3 l5,2 l5,-2.500 M14,5 v6.500" fill="none" stroke="#333" stroke-width="0.600"/><path d="M1.0,12h7.0M4.5,8.5v7.0" stroke="#6fdc3c" stroke-width="2.4"/><path d="M7,19 l6,-9" stroke="#111" stroke-width="1.200"/><path d="M11.2,17h7.6" stroke="#e8dc10" stroke-width="2.4"/></g>
<g transform="translate(712 70)"><ellipse cx="7" cy="16" rx="6" ry="1.400" fill="#555" opacity="0.400"/><path d="M0,2.2 V14.8 A5.5,2.2 0 0 0 11,14.8 V2.2" fill="url(#cb)" stroke="#101840" stroke-width="0.8"/><ellipse cx="5.5" cy="2.2" rx="5.5" ry="2.2" fill="#6a9ae0" stroke="#101840" stroke-width="0.8"/><path d="M5.500,4 v11" stroke="#fff" stroke-width="1" stroke-dasharray="2 1.500"/></g>
<g transform="translate(738 70)"><ellipse cx="7" cy="16" rx="6" ry="1.400" fill="#555" opacity="0.400"/><path d="M0,2.2 V14.8 A5.5,2.2 0 0 0 11,14.8 V2.2" fill="url(#cl)" stroke="#101840" stroke-width="0.8"/><ellipse cx="5.5" cy="2.2" rx="5.5" ry="2.2" fill="#6a9ae0" stroke="#101840" stroke-width="0.8"/><path d="M4,4.500 v11 M7,4.500 v11.500" stroke="#e8e020" stroke-width="1.200"/><path d="M1.200,4 v11" stroke="#2a4fa0" stroke-width="1.400"/></g>
<g transform="translate(764 70)"><path d="M0,2.2 V14.8 A5.5,2.2 0 0 0 11,14.8 V2.2" fill="url(#cl)" stroke="#30dcf0" stroke-width="1.1"/><ellipse cx="5.5" cy="2.2" rx="5.5" ry="2.2" fill="#e0e8f8" stroke="#30dcf0" stroke-width="1.1"/><path d="M2,9 l3.500,5 l6.500,-9" fill="none" stroke="#28b028" stroke-width="2.600"/></g>
<g transform="translate(790 70)"><ellipse cx="1" cy="12" rx="5" ry="1.200" fill="#444" opacity="0.500"/><path d="M0,2.2 V14.8 A5.5,2.2 0 0 0 11,14.8 V2.2" fill="url(#cl)" stroke="#30dcf0" stroke-width="1.1"/><ellipse cx="5.5" cy="2.2" rx="5.5" ry="2.2" fill="#e0e8f8" stroke="#30dcf0" stroke-width="1.1"/><rect x="8" y="-2" width="5.500" height="5.500" fill="none" stroke="#c89018" stroke-width="1.200"/><circle cx="10.500" cy="1.500" r="1.500" fill="none" stroke="#e84020" stroke-width="0.800"/></g>
<g transform="translate(816 70)"><path d="M0,2.2 V14.8 A5.5,2.2 0 0 0 11,14.8 V2.2" fill="none" stroke="#5a9ae8" stroke-width="0.9"/><ellipse cx="5.5" cy="2.2" rx="5.5" ry="2.2" fill="none" stroke="#5a9ae8" stroke-width="0.9"/><path d="M2,3 l2,12 M4,3 l4,13 M7,4 l-3,12 M9,3 l-1,13 M6,3 l3,9" fill="none" stroke="#6aa4ec" stroke-width="0.600"/></g>
<g transform="translate(838 70)"><path d="M0,4 l9,-3.500 l9,3.500 l-1.500,7 l-7.500,6 l-7.500,-6z" fill="#2a4a98" stroke="#101c40" stroke-width="0.800"/><path d="M0,4 l9,-3.500 l9,3.500 l-9,3z" fill="#88aae8" stroke="#101c40" stroke-width="0.600"/><path d="M9,7 l9,-3 l-1.500,7 l-7.500,6z" fill="#1a2e70"/><path d="M9,7 v10" stroke="#101c40" stroke-width="0.600"/></g>
<g transform="translate(879 69)"><path d="M0,1.500h4M2,-0.500v4M0,5.500h4" stroke="#111" stroke-width="0.900"/><g transform="translate(3 0)"><path d="M10.5,10.5 l6,6" stroke="#8a8f9c" stroke-width="3" stroke-linecap="round"/><circle cx="7" cy="7" r="5.5" fill="#cfe2f8" stroke="#7d8698" stroke-width="1.600"/><path d="M5.5,4 l4,3 l-4,3z" fill="#9fb4d0"/></g><g transform="translate(11 9) scale(0.95)"><path d="M0,3 l5,-2 l5,2 v6 l-5,2.500 l-5,-2.500z" fill="#6a6a6a" stroke="#333" stroke-width="0.500"/><path d="M0,3 l5,2 v6.500 l-5,-2.500z" fill="#9a9a9a"/><path d="M0,3 l5,-2 l5,2 l-5,2z" fill="#b8b8b8"/></g></g>
<g transform="translate(905 69)"><g transform="translate(2 0)"><path d="M10.5,10.5 l6,6" stroke="#8a8f9c" stroke-width="3" stroke-linecap="round"/><circle cx="7" cy="7" r="5.5" fill="#cfe2f8" stroke="#7d8698" stroke-width="1.600"/><path d="M5.5,4 l4,3 l-4,3z" fill="#9fb4d0"/></g><g transform="translate(11 9) scale(0.95)"><path d="M0,3 l5,-2 l5,2 v6 l-5,2.500 l-5,-2.500z" fill="#6a6a6a" stroke="#333" stroke-width="0.500"/><path d="M0,3 l5,2 v6.500 l-5,-2.500z" fill="#9a9a9a"/><path d="M0,3 l5,-2 l5,2 l-5,2z" fill="#b8b8b8"/></g><g transform="translate(1 1)"><path d="M-1,-1h3v3h-3z" fill="#48c830" stroke="#1c7c14" stroke-width="0.500"/></g><g transform="translate(17 1)"><path d="M-1,-1h3v3h-3z" fill="#48c830" stroke="#1c7c14" stroke-width="0.500"/></g><g transform="translate(1 17)"><path d="M-1,-1h3v3h-3z" fill="#48c830" stroke="#1c7c14" stroke-width="0.500"/></g><g transform="translate(17 17)"><path d="M-1,-1h3v3h-3z" fill="#48c830" stroke="#1c7c14" stroke-width="0.500"/></g></g>
<g transform="translate(931 69)"><rect x="2.500" y="3.500" width="15" height="12" fill="#e8eefc" stroke="#222" stroke-width="1"/><text x="4" y="13.500" font-size="9" font-weight="bold" fill="#1c2a9a">1:1</text><g transform="translate(2 2)"><path d="M-1,-1h3v3h-3z" fill="#48c830" stroke="#1c7c14" stroke-width="0.500"/></g><g transform="translate(18 2)"><path d="M-1,-1h3v3h-3z" fill="#48c830" stroke="#1c7c14" stroke-width="0.500"/></g><g transform="translate(2 17)"><path d="M-1,-1h3v3h-3z" fill="#48c830" stroke="#1c7c14" stroke-width="0.500"/></g><g transform="translate(18 17)"><path d="M-1,-1h3v3h-3z" fill="#48c830" stroke="#1c7c14" stroke-width="0.500"/></g></g>
<g transform="translate(958 69)"><path d="M4,16 l12,-12" stroke="#30b828" stroke-width="2.200"/><path d="M18,1 l-7,2 l5,5z" fill="#30b828"/><circle cx="3.500" cy="16" r="3" fill="url(#gry)" stroke="#444" stroke-width="0.500"/></g>
<g transform="translate(993 79)"><path d="M-6.500,1 a6.500,7 0 0 1 10,-6.500" fill="none" stroke="#2ca020" stroke-width="2.600"/><path d="M1,-9 l6,3 l-6,3.500z" fill="#2ca020"/><path d="M6.500,-1 a6.500,7 0 0 1 -10,6.500" fill="none" stroke="#2ca020" stroke-width="2.600"/><path d="M-1,9 l-6,-3 l6,-3.500z" fill="#2ca020"/></g>
<g transform="translate(1010 68)"><path d="M0,7 Q4,0.500 10,0.500 Q15,0.800 18,5.500" fill="none" stroke="#2d3148" stroke-width="1.800"/><path d="M0.500,7.500 Q5,2 10,2 Q15,2.500 17.500,6 Q13,9.500 8,9 Q3,9 0.500,7.500Z" fill="#c2c6dc"/><circle cx="9.500" cy="5.300" r="3.600" fill="#4a5b86"/><circle cx="9.500" cy="5.300" r="1.600" fill="#1c2440"/><circle cx="8.300" cy="4.200" r="0.900" fill="#dfe6f8"/><path d="M11,0.300 l1,-1.300 M13.500,0.800 l1.300,-1.300 M15.800,2 l1.500,-1.200 M8,0.300 l0,-1.200" stroke="#2d3148" stroke-width="0.700"/><circle cx="9.500" cy="14" r="6.500" fill="#f8d848" stroke="#c89818" stroke-width="0.600"/><circle cx="7.300" cy="12.500" r="0.900" fill="#222"/><circle cx="11.700" cy="12.500" r="0.900" fill="#222"/><path d="M6,15.500 q3.500,3 7,0" fill="none" stroke="#7a4a10" stroke-width="0.800"/></g>
<g transform="translate(1052 68)"><path d="M0,11 l9,-6 l10,5 l-9,7z" fill="#e4ecfa" stroke="#8a94b0" stroke-width="0.600"/><path d="M5,13 v-11" stroke="#1c6ce8" stroke-width="1.800"/><path d="M5,-0.500 l-2.500,4 h5z" fill="#1c6ce8"/><path d="M5,13 l9,-6" stroke="#28b028" stroke-width="1.600"/><path d="M16,5.500 l-4.500,0.800 l2.500,3z" fill="#28b028"/><path d="M5,13 l9,4.500" stroke="#e02020" stroke-width="1.600"/><path d="M16.500,19 l-4.500,-0.500 l1.800,-3z" fill="#e02020"/><circle cx="5" cy="13" r="1.800" fill="#e8e8e8" stroke="#555" stroke-width="0.500"/></g>
<g transform="translate(1078 68)"><g transform="translate(7 0) scale(0.620)"><path d="M0,11 l9,-6 l10,5 l-9,7z" fill="#e4ecfa" stroke="#8a94b0" stroke-width="0.600"/><path d="M5,13 v-11" stroke="#1c6ce8" stroke-width="1.800"/><path d="M5,-0.500 l-2.500,4 h5z" fill="#1c6ce8"/><path d="M5,13 l9,-6" stroke="#28b028" stroke-width="1.600"/><path d="M16,5.500 l-4.500,0.800 l2.500,3z" fill="#28b028"/><path d="M5,13 l9,4.500" stroke="#e02020" stroke-width="1.600"/><path d="M16.500,19 l-4.500,-0.500 l1.800,-3z" fill="#e02020"/><circle cx="5" cy="13" r="1.800" fill="#e8e8e8" stroke="#555" stroke-width="0.500"/></g><path d="M2,17 l7,-7" stroke="#2ca020" stroke-width="3"/><path d="M12,7 l-7,1.500 l5.500,5.500z" fill="#2ca020"/><rect x="10" y="14" width="9" height="5" fill="#e0e0e0" stroke="#888" stroke-width="1"/></g>
<g transform="translate(1104 68)"><g transform="translate(8 0) scale(0.620)"><path d="M0,11 l9,-6 l10,5 l-9,7z" fill="#e4ecfa" stroke="#8a94b0" stroke-width="0.600"/><path d="M5,13 v-11" stroke="#1c6ce8" stroke-width="1.800"/><path d="M5,-0.500 l-2.500,4 h5z" fill="#1c6ce8"/><path d="M5,13 l9,-6" stroke="#28b028" stroke-width="1.600"/><path d="M16,5.500 l-4.500,0.800 l2.500,3z" fill="#28b028"/><path d="M5,13 l9,4.500" stroke="#e02020" stroke-width="1.600"/><path d="M16.500,19 l-4.500,-0.500 l1.800,-3z" fill="#e02020"/><circle cx="5" cy="13" r="1.800" fill="#e8e8e8" stroke="#555" stroke-width="0.500"/></g><path d="M0,9 l6,-4 v2.500 l6,6 l-2,2 l-6,-6 h-2.500z M13,20 l-6,-1 l2,-2 l-4,-4 l2,-2 l4,4 l2,-2z" fill="#3cb828" stroke="#1c7c14" stroke-width="0.400"/></g>
<g transform="translate(1148 69)"><rect x="-1" y="-1" width="20" height="20" fill="#c4c8d4"/><rect x="0.0" y="0.0" width="5.600" height="5.600" fill="#10c8e8"/><rect x="6.3" y="0.0" width="5.600" height="5.600" fill="#f0c800"/><rect x="12.6" y="0.0" width="5.600" height="5.600" fill="#10d020"/><rect x="0.0" y="6.3" width="5.600" height="5.600" fill="#f07800"/><rect x="6.3" y="6.3" width="5.600" height="5.600" fill="#a05a10"/><rect x="12.6" y="6.3" width="5.600" height="5.600" fill="#f010d0"/><rect x="0.0" y="12.6" width="5.600" height="5.600" fill="#1020e0"/><rect x="6.3" y="12.6" width="5.600" height="5.600" fill="#18a828"/><rect x="12.6" y="12.6" width="5.600" height="5.600" fill="#8a8a8a"/></g>
<g transform="translate(1174 68)"><rect x="1" y="0.500" width="14" height="19" fill="#f4f6fc" stroke="#5a6a98" stroke-width="1.200"/><path d="M3,3.500h10" stroke="#f0a020" stroke-width="1.400"/><path d="M3,6.500h10" stroke="#58b0e8" stroke-width="1.200"/><rect x="3.0" y="9.0" width="3" height="2.700" fill="#10c8e8"/><rect x="6.5" y="9.0" width="3" height="2.700" fill="#f0c800"/><rect x="10.0" y="9.0" width="3" height="2.700" fill="#10d020"/><rect x="3.0" y="12.2" width="3" height="2.700" fill="#f07800"/><rect x="6.5" y="12.2" width="3" height="2.700" fill="#a05a10"/><rect x="10.0" y="12.2" width="3" height="2.700" fill="#f010d0"/><rect x="3.0" y="15.4" width="3" height="2.700" fill="#1020e0"/><rect x="6.5" y="15.4" width="3" height="2.700" fill="#18a828"/><rect x="10.0" y="15.4" width="3" height="2.700" fill="#8a8a8a"/></g>
<g transform="translate(1209 79)"><circle r="10" fill="#5a8a30"/><circle r="8.300" fill="#8ab850" stroke="#b8d890" stroke-width="0.800"/><path d="M-5,5.500 l9,-10 M-4.500,-5 l9.500,10.500" stroke="#e4e6ea" stroke-width="2.600" stroke-linecap="round"/><path d="M-5,5.500 l4,-4.500" stroke="#3c7ad8" stroke-width="2.800" stroke-linecap="round"/></g>
<g transform="translate(1225 68)"><rect x="0.500" y="0.500" width="19" height="19" fill="#cfe0f8" stroke="#5a6a98" stroke-width="1"/><rect x="0.500" y="0.500" width="19" height="3.500" fill="#2a4a98"/><path d="M2,6.500h16" stroke="#c8a020" stroke-width="1.600" stroke-dasharray="2 1"/><path d="M6,18 l8,-8 M6,10 l8,8" stroke="#8a909c" stroke-width="2.200"/><path d="M6,18 l3.500,-3.500" stroke="#3c7ad8" stroke-width="2.400"/></g>
<g transform="translate(1251 69)"><rect x="1.500" y="2.500" width="16" height="15" fill="none" stroke="#222" stroke-width="1.400" stroke-dasharray="1.500 2.500"/><path d="M7,8 q3,-6 9,-4 l3,3 l-2,3 l-4,1 l-5,1z" fill="#e8b878" stroke="#8a5a20" stroke-width="0.500"/><circle cx="4.500" cy="14.500" r="3" fill="#f8e020" stroke="#2040c0" stroke-width="0.800"/><path d="M4.500,11v7M1,14.500h7" stroke="#2040c0" stroke-width="0.800"/></g>
<g transform="translate(1278 69)"><path d="M5,3 l13,-2 l-4,14 l-14,3z" fill="#e87878" stroke="#2a5ac8" stroke-width="1.400"/><path d="M3.500,8 l13,-2.500 M2,13 l13,-2.500 M9,2.500 l-4,14.500 M13.500,2 l-4,14.500" stroke="#f8d0d0" stroke-width="0.900"/><path d="M0,18 l14,-3 l1,1.500 l-14,3z" fill="#3a6ad8"/></g>
<rect x="64" y="113" width="24" height="24" fill="#878c9f"/>
<rect x="92" y="113" width="24" height="24" fill="#878c9f"/>
<rect x="120" y="113" width="24" height="24" fill="#878c9f"/>
<rect x="148" y="113" width="24" height="24" fill="#878c9f"/>
<rect x="176" y="113" width="24" height="24" fill="#878c9f"/>
<rect x="204" y="113" width="24" height="24" fill="#878c9f"/>
<rect x="232" y="113" width="24" height="24" fill="#878c9f"/>
<rect x="260" y="113" width="24" height="24" fill="#878c9f"/>
<rect x="288" y="113" width="24" height="24" fill="#878c9f"/>
<rect x="316" y="113" width="24" height="24" fill="#878c9f"/>
<rect x="344" y="113" width="24" height="24" fill="#878c9f"/>
<g transform="translate(64 113)"><rect x="4" y="4" width="16" height="4" rx="0.500" fill="#4f6493"/><rect x="4" y="10" width="16" height="4" rx="0.500" fill="#4f6493"/><rect x="4" y="16" width="16" height="4" rx="0.500" fill="#4f6493"/></g>
<g transform="translate(92 113)"><rect x="5.500" y="6.500" width="13" height="11" fill="url(#pg)" stroke="#7a8aa8" stroke-width="0.600"/><g transform="translate(4 5)"><path d="M-1,-1h3v3h-3z" fill="#48c830" stroke="#1c7c14" stroke-width="0.500"/></g><path d="M4,5 l2,2" stroke="#38b828" stroke-width="1"/><g transform="translate(20 5)"><path d="M-1,-1h3v3h-3z" fill="#48c830" stroke="#1c7c14" stroke-width="0.500"/></g><path d="M20,5 l-2,2" stroke="#38b828" stroke-width="1"/><g transform="translate(4 19)"><path d="M-1,-1h3v3h-3z" fill="#48c830" stroke="#1c7c14" stroke-width="0.500"/></g><path d="M4,19 l2,-2" stroke="#38b828" stroke-width="1"/><g transform="translate(20 19)"><path d="M-1,-1h3v3h-3z" fill="#48c830" stroke="#1c7c14" stroke-width="0.500"/></g><path d="M20,19 l-2,-2" stroke="#38b828" stroke-width="1"/></g>
<g transform="translate(120 113)"><path d="M3,8 l5,1 M2.500,12 l5,0 M4,16 l4,-1" stroke="#c0c8dc" stroke-width="1.400"/><path d="M10,16 l-4,5" stroke="#b0b4c0" stroke-width="2.600" stroke-linecap="round"/><circle cx="14" cy="11" r="5.500" fill="#b8d4f4" stroke="#98a4bc" stroke-width="1.500"/><circle cx="15" cy="12" r="2.500" fill="#e4f0ff"/></g>
<g transform="translate(148 113)"><path d="M3,14 l9,-5 l9,4 l-8,6z" fill="none" stroke="#6a6e80" stroke-width="0.600"/><path d="M11,14 V5" stroke="#1c78f0" stroke-width="2"/><path d="M11,2 l-2.800,4.500 h5.600z" fill="#1c78f0"/><path d="M11,14 l7,-5" stroke="#28b028" stroke-width="1.500"/><path d="M20,7.500 l-4,0.500 l2.300,2.800z" fill="#28b028"/><path d="M11,14 l7,5" stroke="#e02020" stroke-width="1.800"/><path d="M20.500,21 l-4.800,-1 l2.300,-3z" fill="#e02020"/><circle cx="11" cy="14" r="1.800" fill="#f0f0f0" stroke="#555" stroke-width="0.500"/></g>
<g transform="translate(176 113)"><path d="M12,3 L21.500,6.800 L12,10.400 L3,6.800Z M3,6.800 V16 L12.200,21.300 V10.400 M21.500,6.800 V16 L12.200,21.300 M12,3 L12.400,12.600 L3,16 M12.400,12.600 L21.500,16" fill="none" stroke="#0a0a0a" stroke-width="1.300" stroke-linejoin="round"/><polygon points="12,3 21.5,6.8 12,10.4 3,6.8" fill="url(#gg)" stroke="#1e9a18" stroke-width="0.500"/></g>
<g transform="translate(204 113)"><polygon points="3,16 12.4,12.6 21.5,16 12.2,21.3" fill="url(#gg)" stroke="#1e9a18" stroke-width="0.500"/><path d="M12,3 L21.500,6.800 L12,10.400 L3,6.800Z M3,6.800 V16 L12.200,21.300 V10.400 M21.500,6.800 V16 L12.200,21.300 M12,3 L12.400,12.600 L3,16 M12.400,12.600 L21.500,16" fill="none" stroke="#0a0a0a" stroke-width="1.300" stroke-linejoin="round"/></g>
<g transform="translate(232 113)"><polygon points="12,3 3,6.8 3,16 12.4,12.6" fill="url(#gg)" stroke="#1e9a18" stroke-width="0.500"/><path d="M12,3 L21.500,6.800 L12,10.400 L3,6.800Z M3,6.800 V16 L12.200,21.300 V10.400 M21.500,6.800 V16 L12.200,21.300 M12,3 L12.400,12.600 L3,16 M12.400,12.600 L21.500,16" fill="none" stroke="#0a0a0a" stroke-width="1.300" stroke-linejoin="round"/></g>
<g transform="translate(260 113)"><path d="M12,3 L21.500,6.800 L12,10.400 L3,6.800Z M3,6.800 V16 L12.200,21.300 V10.400 M21.500,6.800 V16 L12.200,21.300 M12,3 L12.400,12.600 L3,16 M12.400,12.600 L21.500,16" fill="none" stroke="#0a0a0a" stroke-width="1.300" stroke-linejoin="round"/><polygon points="12,10.4 21.5,6.8 21.5,16 12.2,21.3" fill="url(#gg)" stroke="#1e9a18" stroke-width="0.500"/></g>
<g transform="translate(288 113)"><path d="M12,3 L21.500,6.800 L12,10.400 L3,6.800Z M3,6.800 V16 L12.200,21.300 V10.400 M21.500,6.800 V16 L12.200,21.300 M12,3 L12.400,12.600 L3,16 M12.400,12.600 L21.500,16" fill="none" stroke="#0a0a0a" stroke-width="1.300" stroke-linejoin="round"/><polygon points="3,6.8 12,10.4 12.2,21.3 3,16" fill="url(#gg)" stroke="#1e9a18" stroke-width="0.500"/></g>
<g transform="translate(316 113)"><polygon points="12,3 21.5,6.8 21.5,16 12.4,12.6" fill="url(#gg)" stroke="#1e9a18" stroke-width="0.500"/><path d="M12,3 L21.500,6.800 L12,10.400 L3,6.800Z M3,6.800 V16 L12.200,21.300 V10.400 M21.500,6.800 V16 L12.200,21.300 M12,3 L12.400,12.600 L3,16 M12.400,12.600 L21.500,16" fill="none" stroke="#0a0a0a" stroke-width="1.300" stroke-linejoin="round"/></g>
<g transform="translate(344 113)"><path d="M12,3 L21,7 L12,11 L3,7Z" fill="#58e038"/><path d="M3,7 V16 L12,21 V11Z" fill="#28b818"/><path d="M12,11 L21,7 V16 L12,21Z" fill="#1a9a10"/></g>
<rect x="64" y="141" width="24" height="24" fill="#878c9f"/>
<rect x="64" y="169" width="24" height="24" fill="#878c9f"/>
<rect x="64.5" y="197.5" width="23" height="23" fill="#b5a468" stroke="#f2cc58" stroke-width="1"/>
<rect x="64" y="225" width="24" height="24" fill="#878c9f"/>
<rect x="64" y="253" width="24" height="24" fill="#878c9f"/>
<g transform="translate(70.5 145)"><path d="M0,2.2 V13.8 A5.5,2.2 0 0 0 11,13.8 V2.2" fill="none" stroke="#1a1a1a" stroke-width="0.9"/><ellipse cx="5.5" cy="2.2" rx="5.5" ry="2.2" fill="none" stroke="#1a1a1a" stroke-width="0.9"/><path d="M0,13.800 A5.500,2.200 0 0 1 11,13.800" fill="none" stroke="#1a1a1a" stroke-width="0.700"/></g>
<g transform="translate(70.5 173)"><path d="M0,2.2 V13.8 A5.5,2.2 0 0 0 11,13.8 V2.2" fill="none" stroke="#1a1a1a" stroke-width="0.9"/><ellipse cx="5.5" cy="2.2" rx="5.5" ry="2.2" fill="none" stroke="#1a1a1a" stroke-width="0.9"/></g>
<g transform="translate(70.5 201)"><ellipse cx="7.500" cy="15.500" rx="6" ry="1.500" fill="#3a3420" opacity="0.500"/><path d="M0,2.2 V13.8 A5.5,2.2 0 0 0 11,13.8 V2.2" fill="url(#cb)" stroke="#101840" stroke-width="0.7"/><ellipse cx="5.5" cy="2.2" rx="5.5" ry="2.2" fill="#6a9ae0" stroke="#101840" stroke-width="0.7"/></g>
<g transform="translate(70.5 229)"><ellipse cx="7.500" cy="15.500" rx="6" ry="1.500" fill="#444" opacity="0.400"/><path d="M0,2.2 V13.8 A5.5,2.2 0 0 0 11,13.8 V2.2" fill="url(#cl)" stroke="#2a2a3a" stroke-width="0.7"/><ellipse cx="5.5" cy="2.2" rx="5.5" ry="2.2" fill="#e4ecf8" stroke="#2a2a3a" stroke-width="0.7"/></g>
<g transform="translate(70.5 257)"><path d="M0,2.2 V13.8 A5.5,2.2 0 0 0 11,13.8 V2.2" fill="none" stroke="#1a1a1a" stroke-width="0.9"/><ellipse cx="5.5" cy="2.2" rx="5.5" ry="2.2" fill="none" stroke="#1a1a1a" stroke-width="0.9"/><path d="M2,3 l2,11 M4,3 l4,12 M7,4 l-3,11 M9,3 l-1,12 M6,3 l3,9" fill="none" stroke="#222" stroke-width="0.600"/></g>
<g transform="translate(7 134)"><path d="M2,6 l5,1 M1.500,10 l5,0 M3,14 l4,-1" stroke="#b8c0d8" stroke-width="1.400"/><path d="M9,14 l-4,5" stroke="#a8acb8" stroke-width="2.600" stroke-linecap="round"/><circle cx="13" cy="9" r="5.500" fill="#b8d4f4" stroke="#8c98b4" stroke-width="1.500"/><circle cx="14" cy="10" r="2.500" fill="#e4f0ff"/></g>
<g transform="translate(34 134)"><path d="M3,3 l14,14 M3,12 l9,-9" stroke="#3c6ad8" stroke-width="1.400"/><path d="M3,17 l1.500,-4.500 l10,-10 l3,3 l-10,10z" fill="#e8a838" stroke="#6a4810" stroke-width="0.600"/><path d="M3,17 l1.500,-4.500 l3,3z" fill="#f0d8b0"/><path d="M3,17 l0.800,-2 l1.200,1.200z" fill="#222"/><path d="M14.500,2.500 l3,3 l1.200,-1.200 l-3,-3z" fill="#d02828"/></g>
<path d="M48,132 h6 l-3,3z" fill="#000"/>
<g transform="translate(7 160)"><rect x="4.500" y="4.500" width="12" height="11" fill="url(#pg)" stroke="#7a8aa8" stroke-width="0.600"/><g transform="translate(2 2)"><path d="M-1,-1h3v3h-3z" fill="#48c830" stroke="#1c7c14" stroke-width="0.500"/></g><g transform="translate(18 2)"><path d="M-1,-1h3v3h-3z" fill="#48c830" stroke="#1c7c14" stroke-width="0.500"/></g><g transform="translate(2 17)"><path d="M-1,-1h3v3h-3z" fill="#48c830" stroke="#1c7c14" stroke-width="0.500"/></g><g transform="translate(18 17)"><path d="M-1,-1h3v3h-3z" fill="#48c830" stroke="#1c7c14" stroke-width="0.500"/></g><path d="M2,2 l3,3 M18,2 l-3,3 M2,17 l3,-3 M18,17 l-3,-3" stroke="#38b828" stroke-width="1"/></g>
<g transform="translate(34 160)"><path d="M4,9 q-3,-5 2,-6 q5,0 6,6 q2,8 7,6 q2,-3 -2,-6" fill="none" stroke="#3c6ad8" stroke-width="1.500"/><path d="M3,17 l1.500,-4.500 l10,-10 l3,3 l-10,10z" fill="#e8a838" stroke="#6a4810" stroke-width="0.600"/><path d="M3,17 l1.500,-4.500 l3,3z" fill="#f0d8b0"/><path d="M3,17 l0.800,-2 l1.200,1.200z" fill="#222"/><path d="M14.500,2.500 l3,3 l1.200,-1.200 l-3,-3z" fill="#d02828"/></g>
<path d="M48,158 h6 l-3,3z" fill="#000"/>
<g transform="translate(7 186)"><path d="M0,2.500h4M2,0.500v4M0,6.500h4" stroke="#111" stroke-width="0.900"/><g transform="translate(2 1)"><path d="M10.5,10.5 l6,6" stroke="#8a8f9c" stroke-width="3" stroke-linecap="round"/><circle cx="7" cy="7" r="5.5" fill="#cfe2f8" stroke="#7d8698" stroke-width="1.600"/><path d="M5.5,4 l4,3 l-4,3z" fill="#9fb4d0"/></g><g transform="translate(10 10) scale(0.95)"><path d="M0,3 l5,-2 l5,2 v6 l-5,2.500 l-5,-2.500z" fill="#6a6a6a" stroke="#333" stroke-width="0.500"/><path d="M0,3 l5,2 v6.500 l-5,-2.500z" fill="#9a9a9a"/><path d="M0,3 l5,-2 l5,2 l-5,2z" fill="#b8b8b8"/></g></g>
<path d="M21,184 h6 l-3,3z" fill="#000"/>
<g transform="translate(34 186)"><path d="M1.500,2.500 h14 v9 h-3 v4 h-11z" fill="none" stroke="#e8e010" stroke-width="1.600"/><path d="M4,9 l3,4 l8,-9" fill="none" stroke="#30b028" stroke-width="2.600"/></g>
<path d="M48,184 h6 l-3,3z" fill="#000"/>
<g transform="translate(7 212)"><path d="M0,11 l9,-6 l10,5 l-9,7z" fill="#e4ecfa" stroke="#8a94b0" stroke-width="0.600"/><path d="M5,13 v-11" stroke="#1c6ce8" stroke-width="1.800"/><path d="M5,-0.500 l-2.500,4 h5z" fill="#1c6ce8"/><path d="M5,13 l9,-6" stroke="#28b028" stroke-width="1.600"/><path d="M16,5.500 l-4.500,0.800 l2.500,3z" fill="#28b028"/><path d="M5,13 l9,4.500" stroke="#e02020" stroke-width="1.600"/><path d="M16.500,19 l-4.500,-0.500 l1.800,-3z" fill="#e02020"/><circle cx="5" cy="13" r="1.800" fill="#e8e8e8" stroke="#555" stroke-width="0.500"/></g>
<path d="M21,210 h6 l-3,3z" fill="#000"/>
<g transform="translate(34 212)"><path d="M1,12 q2,-10 5,-6 q3,6 6,8 q4,1 5,-5" fill="none" stroke="#3c6ad8" stroke-width="1.500"/><path d="M3,17 l1.500,-4.500 l10,-10 l3,3 l-10,10z" fill="#e8a838" stroke="#6a4810" stroke-width="0.600"/><path d="M3,17 l1.500,-4.500 l3,3z" fill="#f0d8b0"/><path d="M3,17 l0.800,-2 l1.200,1.200z" fill="#222"/><path d="M14.500,2.500 l3,3 l1.200,-1.200 l-3,-3z" fill="#d02828"/></g>
<path d="M48,210 h6 l-3,3z" fill="#000"/>
<g transform="translate(8 239)"><path d="M0,2.500 l4,-2 h7 l-3,2z M0,5.500 l4,-2 h7 l-3,2z M0,8.500 l4,-2 h7 l-3,2z" fill="#aab6ea" stroke="#5060b0" stroke-width="0.500"/><ellipse cx="10" cy="13" rx="7.500" ry="4.500" fill="#b89068" stroke="#6a4a2a" stroke-width="0.500"/><circle cx="7" cy="14" r="1.600" fill="#2040e0"/><circle cx="11" cy="15" r="1.600" fill="#d01818"/><circle cx="13.500" cy="12.500" r="1.500" fill="#18a828"/><path d="M9,12 l8,-11" stroke="#b86820" stroke-width="1.600"/></g>
<path d="M21,236 h6 l-3,3z" fill="#000"/>
<g transform="translate(34 238)"><path d="M5,3 l13,-1 l-4,13 l-14,2z" fill="#5a8ae8" stroke="#2a4ab8" stroke-width="0.800"/><path d="M6.500,4.500 l5,-0.500 l-1.500,5 l-5,0.700z M12.500,4 l4,-0.400 l-1.500,5 l-4,0.500z M4.500,11 l5,-0.700 l-1.300,4.500 l-5.500,0.800z M10.500,10 l4,-0.500 l-1.300,4.500 l-4,0.500z" fill="#b8d0f8"/></g>
<path d="M48,236 h6 l-3,3z" fill="#000"/>
<g transform="translate(17 274)"><path d="M-7,0 a7,7 0 0 1 12,-5 l2,-2 v6.500 h-6.500 l2,-2 a4,4 0 0 0 -6.500,2.500z" fill="#6a9be0" stroke="#3a6ab8" stroke-width="0.500"/><path d="M7,0 a7,7 0 0 1 -12,5 l-2,2 v-6.500 h6.500 l-2,2 a4,4 0 0 0 6.500,-2.500z" fill="#8ab4ec" stroke="#3a6ab8" stroke-width="0.500"/></g>
<path d="M21,262 h6 l-3,3z" fill="#000"/>
<g transform="translate(34 264)"><ellipse cx="11" cy="17.500" rx="8" ry="1.800" fill="#555" opacity="0.400"/><g transform="translate(1 1) scale(1.7)"><path d="M0,3 l5,-2 l5,2 v6 l-5,2.500 l-5,-2.500z" fill="#6a6a6a" stroke="#333" stroke-width="0.500"/><path d="M0,3 l5,2 v6.500 l-5,-2.500z" fill="#9a9a9a"/><path d="M0,3 l5,-2 l5,2 l-5,2z" fill="#b8b8b8"/></g></g>
<path d="M48,262 h6 l-3,3z" fill="#000"/>
<g transform="translate(7 290)"><ellipse cx="10" cy="18.500" rx="6" ry="1.500" fill="#666" opacity="0.350"/><text x="4" y="15" font-size="18" font-weight="bold" fill="#3c72d0">?</text></g>
<path d="M21,288 h6 l-3,3z" fill="#000"/>
<g transform="translate(34 290)"><path d="M1.500,3 v15 M18.500,3 v15" stroke="#222" stroke-width="1.200"/><path d="M3,6.500 h14" stroke="#e8d810" stroke-width="1.800"/><path d="M2,6.500 l4,-2.500 v5z M18,6.500 l-4,-2.500 v5z" fill="#e8d810" stroke="#8a8000" stroke-width="0.300"/></g>
<path d="M48,288 h6 l-3,3z" fill="#000"/>
<g transform="translate(7 316)"><path d="M3,5 h14 l-2,13 h-10z" fill="#a8d0e8" stroke="#4a7a98" stroke-width="0.800"/><ellipse cx="10" cy="5" rx="7" ry="1.800" fill="#d0e8f4" stroke="#4a7a98" stroke-width="0.700"/><path d="M7,9 l6,5 M13,9 l-6,5" stroke="#e8f0a0" stroke-width="1.200"/><path d="M8,1 h4 v3 h-4z" fill="#e8d020"/></g>
<path d="M21,314 h6 l-3,3z" fill="#000"/>
<g transform="translate(35 318)"><path d="M0,7 l7,-6 v3.500 q8,0 8,7 q0,3 -2,4.500 q0.500,-6 -6,-6 v3.500z" fill="#9a9a9a" stroke="#7a7a7a" stroke-width="0.500"/></g>
<path d="M48,314 h6 l-3,3z" fill="#000"/>
<g transform="translate(7 342)"><rect x="0" y="0" width="3" height="14" fill="#4a4a4a"/><path d="M1,12 l-1,4 l4,-1z" fill="#e87818"/><circle cx="11" cy="9" r="5.500" fill="none" stroke="#8a4a18" stroke-width="1.400"/><path d="M11,1 v16 M3,9 h16 M5.500,3.500 l11,11 M16.500,3.500 l-11,11" stroke="#8a4a18" stroke-width="1"/><circle cx="11" cy="9" r="1.800" fill="#e8a020"/><path d="M3,16 l6,-2 l8,2 l-6,3z" fill="#f08820" stroke="#b85a10" stroke-width="0.500"/></g>
<path d="M21,340 h6 l-3,3z" fill="#000"/>
<g transform="translate(34 342)"><path d="M6,7 h8 l4,4 v8 h-12z" fill="#fff" stroke="#222" stroke-width="1"/><path d="M0,3 l2,-2 h5 l1.500,2 h7 v9 h-15.500z" fill="#e8c050" stroke="#a88420" stroke-width="0.600"/><path d="M-1,13 l3,-7 h14 l-3,7z" fill="#f6dc84" stroke="#a88420" stroke-width="0.600"/><path d="M7,3 q3,-4 7,-1 v3 h-6z" fill="#38a838"/></g>
<rect x="1181.500" y="1022.500" width="17" height="16" fill="#c8ccd8" stroke="#7a7e8c"/>
<g transform="translate(1190 1030.5)"><path d="M-5.500,0 a5.500,5.500 0 0 1 9.500,-4 l1.500,-1.500 v5 h-5 l1.500,-1.500 a3,3 0 0 0 -5,2z" fill="#e86070"/><path d="M5.500,0 a5.500,5.500 0 0 1 -9.500,4 l-1.500,1.500 v-5 h5 l-1.500,1.500 a3,3 0 0 0 5,-2z" fill="#f08090"/></g>
<rect x="1212" y="1021" width="18" height="19" fill="#ffe47a"/>
<g transform="translate(1213 1022)"><path d="M5,0 l1.200,3 l3,-1.500 l-1.500,3 l3,1.200 l-3,1.200 l1.500,3 l-3,-1.500 l-1.200,3 l-1.200,-3 l-3,1.500 l1.500,-3 l-3,-1.200 l3,-1.200 l-1.500,-3 l3,1.500z" fill="#c838c8"/><circle cx="5" cy="5.700" r="2.200" fill="#f8e020"/><path d="M7,6 l8,8 l-3,0.500 l1.500,3 l-1.500,0.800 l-1.500,-3 l-2.500,2z" fill="#f0f0f0" stroke="#7a6a30" stroke-width="0.700"/></g>
<g transform="translate(1243 1022)"><path d="M6,3 q3,-3 8,-1 l3,2 l-1.500,3 l-5,1z" fill="#e8b878" stroke="#8a5a20" stroke-width="0.500"/><path d="M2,9 l6,-5 l6,5 v8 h-12z" fill="#8a98b8" stroke="#4a5a80" stroke-width="0.600"/><rect x="4" y="10" width="8" height="7" fill="#dce8fc"/><path d="M5,13.500 h3 M6.500,12 v3 M9,12 h2.500 v3 h-2.500z" stroke="#2a52c0" stroke-width="0.800" fill="none"/></g>
<g transform="translate(1276 1021)"><ellipse cx="8" cy="17.500" rx="5.500" ry="1.300" fill="#666" opacity="0.350"/><text x="2" y="15" font-size="18" font-weight="bold" fill="#3c72d0">?</text></g>
<g transform="translate(1305 1022)"><path d="M6,2 l4,-1.500 l4,1.500 v4.500 l-4,2 l-4,-2z" fill="#3a7ae0" stroke="#1c3c90" stroke-width="0.500"/><path d="M6,2 l4,1.500 l4,-1.500 M10,3.500 v5" stroke="#b8d0f8" stroke-width="0.600" fill="none"/><path d="M10,9 l4.500,-1.500 l4,2 v5 l-4.500,2 l-4,-2z" fill="#5a7a88" stroke="#1c2c30" stroke-width="0.600"/><path d="M10,9 l4,2 l4.500,-1.500 M14,11 v5.500" stroke="#c8d8e0" stroke-width="0.600" fill="none"/><path d="M0,11 h8 M5,8 l3,3 l-3,3 M1,7 l4,4 M1,15 l4,-4" stroke="#e81010" stroke-width="1.400" fill="none"/></g>
<rect x="1336" y="1021" width="18" height="19" fill="#ffe47a"/>
<g transform="translate(1337 1022)"><path d="M1,4 l7.500,-3 l7.500,3 l-7.500,3z" fill="#e838e0" stroke="#6a1a70" stroke-width="0.500"/><path d="M1,4 l7.500,3 v9 l-7.500,-3.500z" fill="#58a8f0" stroke="#1c3c90" stroke-width="0.500"/><path d="M8.500,7 l7.500,-3 v8.500 l-7.500,3.500z" fill="#a8b8a8" stroke="#3a4a3a" stroke-width="0.500"/><path d="M8.500,7 v9" stroke="#1a3ac0" stroke-width="1.200"/></g>
<g transform="translate(1369 1022)"><rect x="0.700" y="0.700" width="11" height="16" fill="#e8e4d8" stroke="#5a6a58" stroke-width="1.200"/><path d="M1,4.500 h10.500 M1,8.500 h10.500 M1,12.500 h10.500" stroke="#5a6a58" stroke-width="1"/><rect x="1.500" y="5.500" width="9.500" height="2.500" fill="#f0a838"/></g>
<g transform="translate(1407 1031)"><path d="M4,-6 a7,7 0 1 1 -9,1.500" fill="none" stroke="#28a028" stroke-width="2.200"/><path d="M-2,-9.500 l0,7 l-5.500,-2.500z" fill="#28a028"/><circle r="2" fill="#2a3ab0"/><path d="M-2,0h4M0,-2v4" stroke="#fff" stroke-width="0.600"/></g>
<g transform="translate(1430 1022)"><rect x="0.800" y="0.800" width="15" height="15" fill="#f0f2f8" stroke="#3a3e50" stroke-width="1.400"/><path d="M8.300,1 v15 M1,8.300 h15" stroke="#3a3e50" stroke-width="1.400"/></g>
<g transform="translate(1901 1010)"><circle r="6.800" fill="#1a2ac8"/><path d="M-5,-3 q2,-3 5,-2 q1,2 -1,3 q-1,3 -3,2z M1,1 q3,-1 4,1 q-1,3 -3,4 q-2,-2 -1,-5z M2,-5.500 q3,0 4,3 l-3,0.500z" fill="#28c028"/><circle r="6.800" fill="none" stroke="#101848" stroke-width="0.600"/><circle cx="-2.500" cy="-3" r="1.600" fill="#fff" opacity="0.500"/></g>
</svg>
<div class="t" style="left:853px;top:6px;font-size:12.5px;color:#000;letter-spacing:0.18px;">VISI 2018 R2 from Vero Software x64 - 模具送料检测机.wkf - [动态的]</div>
<div class="t" style="left:7px;top:27px;font-size:12px;color:#000;">文件</div>
<div class="t" style="left:45px;top:27px;font-size:12px;color:#000;">编辑</div>
<div class="t" style="left:83px;top:27px;font-size:12px;color:#000;">线架构</div>
<div class="t" style="left:133px;top:27px;font-size:12px;color:#000;">点云</div>
<div class="t" style="left:171px;top:27px;font-size:12px;color:#000;">网格</div>
<div class="t" style="left:209px;top:27px;font-size:12px;color:#000;">曲面</div>
<div class="t" style="left:247px;top:27px;font-size:12px;color:#000;">实体编辑</div>
<div class="t" style="left:309px;top:27px;font-size:12px;color:#000;">建模</div>
<div class="t" style="left:347px;top:27px;font-size:12px;color:#000;">分析</div>
<div class="t" style="left:385px;top:27px;font-size:12px;color:#000;">电极</div>
<div class="t" style="left:423px;top:27px;font-size:12px;color:#000;">尺寸标注</div>
<div class="t" style="left:485px;top:27px;font-size:12px;color:#000;">工程图</div>
<div class="t" style="left:535px;top:27px;font-size:12px;color:#000;">系统</div>
<div class="t" style="left:573px;top:27px;font-size:12px;color:#000;">视窗</div>
<div class="t" style="left:611px;top:27px;font-size:12px;color:#000;">加工</div>
<div class="t" style="left:649px;top:27px;font-size:12px;color:#000;">塑模</div>
<div class="t" style="left:687px;top:27px;font-size:12px;color:#000;">冲模</div>
<div class="t" style="left:725px;top:27px;font-size:12px;color:#000;">标准件</div>
<div class="t" style="left:775px;top:27px;font-size:12px;color:#000;">模流分析</div>
<div class="t" style="left:837px;top:27px;font-size:12px;color:#000;">?</div>
<div class="t" style="left:64.5px;top:49px;font-size:12px;color:#000;width:34px;text-align:center;">编辑</div>
<div class="t" style="left:98.5px;top:49px;font-size:12px;color:#000;width:46px;text-align:center;">线架构</div>
<div class="t" style="left:144.5px;top:49px;font-size:12px;color:#000;width:34px;text-align:center;">建模</div>
<div class="t" style="left:178.5px;top:49px;font-size:12px;color:#000;width:34px;text-align:center;">曲面</div>
<div class="t" style="left:212.5px;top:49px;font-size:12px;color:#000;width:34px;text-align:center;">尺寸</div>
<div class="t" style="left:246.5px;top:49px;font-size:12px;color:#000;width:34px;text-align:center;">应用</div>
<div class="t" style="left:280.5px;top:49px;font-size:12px;color:#000;width:34px;text-align:center;">塑膜</div>
<div class="t" style="left:314.5px;top:49px;font-size:12px;color:#000;width:34px;text-align:center;">冲模</div>
<div class="t" style="left:348.5px;top:49px;font-size:12px;color:#000;width:34px;text-align:center;">加工</div>
<div class="t" style="left:382.5px;top:49px;font-size:12px;color:#000;width:34px;text-align:center;">模流</div>
<div class="t" style="left:30.5px;top:48px;font-size:12.5px;color:#000;font-weight:bold;width:34px;text-align:center;">标准</div>
<div class="t" style="left:76px;top:96px;font-size:12px;color:#000;width:120px;text-align:center;">属性/过滤器</div>
<div class="t" style="left:367px;top:96px;font-size:12px;color:#000;width:120px;text-align:center;">图形</div>
<div class="t" style="left:670px;top:96px;font-size:12px;color:#000;width:120px;text-align:center;">图像 (进阶)</div>
<div class="t" style="left:894px;top:96px;font-size:12px;color:#000;width:120px;text-align:center;">视图</div>
<div class="t" style="left:1029px;top:96px;font-size:12px;color:#000;width:120px;text-align:center;">工作平面</div>
<div class="t" style="left:1162px;top:96px;font-size:12px;color:#000;width:120px;text-align:center;">系统</div>
<div class="t" style="left:1486px;top:1006px;font-size:12px;color:#000;">绝对 XY 上视图</div>
<div class="t" style="left:1601px;top:1006px;font-size:12px;color:#000;">绝对视图</div>
<div class="t" style="left:1668px;top:1006px;font-size:12px;color:#000;font-weight:bold;">LAYER0</div>
<div class="t" style="left:1141px;top:1026px;font-size:12px;color:#000;">拴牢</div>
<div class="t" style="left:1463px;top:1026px;font-size:12px;color:#000;">LS: 1.00 PS: 1.00</div>
<div class="t" style="left:1589px;top:1026px;font-size:12px;color:#000;">单位: 毫米</div>
<div class="t" style="left:1663px;top:1026px;font-size:12px;color:#e8141c;letter-spacing:0.52px;">X =-3112.709 Y =-2692.589</div>
<div class="t" style="left:1826px;top:1026px;font-size:12px;color:#000;letter-spacing:0.45px;">Z = 0000.000</div>
<div class="t" style="left:1815px;top:1043px;font-size:11px;color:#fff;">11:28</div>
</div>
</body></html>
